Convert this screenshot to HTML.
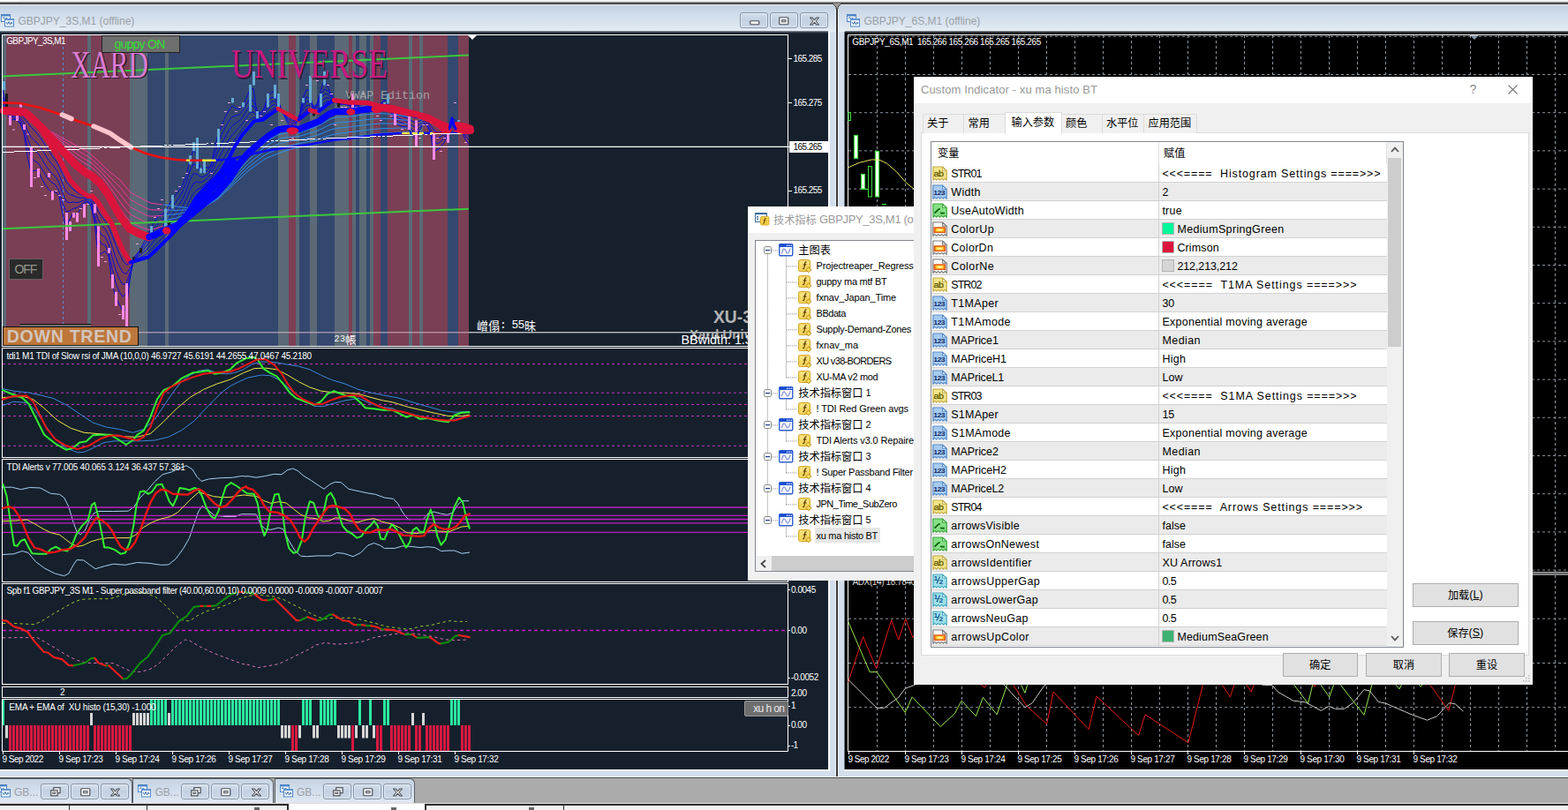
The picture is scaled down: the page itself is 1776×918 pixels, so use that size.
<!DOCTYPE html>
<html><head><meta charset="utf-8"><title>MT4</title>
<style>
html,body{margin:0;padding:0;}
body{width:1776px;height:918px;overflow:hidden;background:#ababab;font-family:"Liberation Sans", sans-serif;position:relative;}
div,svg,span{position:absolute;box-sizing:border-box;}
.t{white-space:pre;line-height:1;}

.tb{background:linear-gradient(#c2d0e0 0%,#cfdcea 35%,#dde7f1 80%,#e6edf5 100%);}
.wbtn{border:1px solid #8595aa;border-radius:3px;background:linear-gradient(#d3deeb,#c3d1e2 50%,#cbd8e7);box-shadow:inset 0 0 0 1px rgba(255,255,255,.45);}
.ttl{color:#9a9fa6;font-size:12px;}
svg text.cjk{font-family:"Liberation Sans","Noto Sans CJK SC",sans-serif;}

</style></head><body>
<div style="left:0;top:0;width:1776px;height:3px;background:#f0f0f0"></div><div style="left:0;top:0;width:22px;height:2px;background:#fff"></div><div style="left:0;top:2px;width:1776px;height:3px;background:linear-gradient(#b0b0b0,#555 45%,#3a3a3a)"></div><div class="tb" style="left:0;top:5px;width:1776px;height:31px;"></div><div style="left:0;top:5px;width:1776px;height:1px;background:#e9eef5"></div><div style="left:0;top:36px;width:1776px;height:844px;background:#d3dfec"></div><div style="left:0;top:35px;width:938px;height:837px;background:linear-gradient(#98a0a8 0px,#3a4450 1.5px,#15202c 3px)"></div><div style="left:938px;top:36px;width:2px;height:837px;background:#f6f8fb"></div><div style="left:0;top:872px;width:940px;height:1.6px;background:#f8fafc"></div><div style="left:957px;top:35px;width:819px;height:837px;background:linear-gradient(#98a0a8 0px,#30343a 1.5px,#000 3px)"></div><div style="left:956px;top:36px;width:1px;height:837px;background:#6c7886"></div><div style="left:956px;top:872px;width:820px;height:1.6px;background:#f8fafc"></div><div style="left:946px;top:5px;width:4px;height:875px;background:#eef3f8"></div><div style="left:947px;top:5px;width:2px;height:877px;background:#3a3a3a"></div><svg style="left:941px;top:3px" width="14" height="7"><path d="M1 0 L13 0 L8 5 L8 7 L6 7 L6 5 Z" fill="#9a9a9a" stroke="#3a3a3a" stroke-width="1"/></svg><svg style="left:1px;top:16px" width="15" height="15" viewBox="0 0 15 15">
<rect x="0.5" y="0.5" width="10" height="8" fill="#f4fbff" stroke="#4f86c6"/>
<rect x="0.5" y="0.5" width="10" height="2" fill="#4f86c6"/>
<polyline points="2,5 3.5,3.5 5,6 6.5,4 8,6" fill="none" stroke="#3b6ea8" stroke-width="1"/>
<rect x="4.5" y="5.5" width="10" height="8.5" fill="#f4fbff" stroke="#4f86c6"/>
<rect x="4.5" y="5.5" width="10" height="1.6" fill="#6d9bd2"/>
<polyline points="6,9 7.5,11.5 9,8.5 10.5,12 12,9 13,11" fill="none" stroke="#3b6ea8" stroke-width="1"/>
</svg><div class="t ttl" style="left:20.5px;top:18px;">GBPJPY_3S,M1 (offline)</div><svg style="left:959px;top:16px" width="15" height="15" viewBox="0 0 15 15">
<rect x="0.5" y="0.5" width="10" height="8" fill="#f4fbff" stroke="#4f86c6"/>
<rect x="0.5" y="0.5" width="10" height="2" fill="#4f86c6"/>
<polyline points="2,5 3.5,3.5 5,6 6.5,4 8,6" fill="none" stroke="#3b6ea8" stroke-width="1"/>
<rect x="4.5" y="5.5" width="10" height="8.5" fill="#f4fbff" stroke="#4f86c6"/>
<rect x="4.5" y="5.5" width="10" height="1.6" fill="#6d9bd2"/>
<polyline points="6,9 7.5,11.5 9,8.5 10.5,12 12,9 13,11" fill="none" stroke="#3b6ea8" stroke-width="1"/>
</svg><div class="t ttl" style="left:978.5px;top:18px;">GBPJPY_6S,M1 (offline)</div><div class="wbtn" style="left:837.5px;top:14px;width:32px;height:18px;"><svg style="left:10px;top:7.5px" width="12" height="6"><rect x="0.75" y="0.75" width="10" height="4" rx="0.8" fill="#f4f4f4" stroke="#4d5259" stroke-width="1.2"/></svg></div><div class="wbtn" style="left:871.8px;top:14px;width:32px;height:18px;"><svg style="left:9.5px;top:4px" width="12" height="10"><rect x="0.75" y="0.75" width="10" height="8" rx="0.8" fill="#f8f8f8" stroke="#4d5259" stroke-width="1.2"/><rect x="3.6" y="3.6" width="4.4" height="2.2" fill="#c9d3df" stroke="#4d5259" stroke-width="1"/></svg></div><div class="wbtn" style="left:905.8px;top:14px;width:32px;height:18px;"><svg style="left:9px;top:4px" width="13" height="10" viewBox="0 0 13 10"><path d="M1.5 1 L4 1 L6.5 3.6 L9 1 L11.5 1 L8 5 L11.5 9 L9 9 L6.5 6.4 L4 9 L1.5 9 L5 5 Z" fill="#f8f8f8" stroke="#4d5259" stroke-width="1.1" stroke-linejoin="round"/></svg></div><div style="left:0;top:880px;width:1776px;height:30px;background:#ababab"></div><div style="left:0;top:880px;width:1776px;height:1px;background:#f2f5f9"></div><div style="left:0;top:881px;width:1776px;height:1px;background:#4c4c4c"></div><div class="tb" style="left:-9.5px;top:882px;width:159.5px;height:28px;border:1px solid #5a5f66;border-bottom:none;border-radius:0 6px 0 0;background:linear-gradient(#c6d3e2,#d3dfec 50%,#dfe8f2)"><svg style="left:5px;top:6px" width="15" height="15" viewBox="0 0 15 15">
<rect x="0.5" y="0.5" width="10" height="8" fill="#f4fbff" stroke="#4f86c6"/>
<rect x="0.5" y="0.5" width="10" height="2" fill="#4f86c6"/>
<polyline points="2,5 3.5,3.5 5,6 6.5,4 8,6" fill="none" stroke="#3b6ea8" stroke-width="1"/>
<rect x="4.5" y="5.5" width="10" height="8.5" fill="#f4fbff" stroke="#4f86c6"/>
<rect x="4.5" y="5.5" width="10" height="1.6" fill="#6d9bd2"/>
<polyline points="6,9 7.5,11.5 9,8.5 10.5,12 12,9 13,11" fill="none" stroke="#3b6ea8" stroke-width="1"/>
</svg><div class="t ttl" style="left:24.5px;top:9px;font-size:12px">GB...</div><div class="wbtn" style="left:54.2px;top:5px;width:32px;height:18px;"><svg style="left:10px;top:3px" width="12" height="11"><rect x="3.7" y="0.7" width="7.4" height="6" fill="#f8f8f8" stroke="#4d5259" stroke-width="1.2"/><rect x="0.7" y="3.8" width="7.4" height="6" fill="#f8f8f8" stroke="#4d5259" stroke-width="1.2"/><rect x="2.8" y="6" width="3" height="1.6" fill="#c9d3df" stroke="#4d5259" stroke-width=".8"/></svg></div><div class="wbtn" style="left:88.1px;top:5px;width:32px;height:18px;"><svg style="left:10px;top:3.5px" width="12" height="10"><rect x="0.75" y="0.75" width="10" height="8" rx="0.8" fill="#f8f8f8" stroke="#4d5259" stroke-width="1.2"/><rect x="3.6" y="3.6" width="4.4" height="2.2" fill="#c9d3df" stroke="#4d5259" stroke-width="1"/></svg></div><div class="wbtn" style="left:122.0px;top:5px;width:32px;height:18px;"><svg style="left:9.5px;top:3.5px" width="13" height="10" viewBox="0 0 13 10"><path d="M1.5 1 L4 1 L6.5 3.6 L9 1 L11.5 1 L8 5 L11.5 9 L9 9 L6.5 6.4 L4 9 L1.5 9 L5 5 Z" fill="#f8f8f8" stroke="#4d5259" stroke-width="1.1" stroke-linejoin="round"/></svg></div></div><div class="tb" style="left:150px;top:882px;width:160px;height:28px;border:1px solid #5a5f66;border-bottom:none;border-radius:0 6px 0 0;background:linear-gradient(#c6d3e2,#d3dfec 50%,#dfe8f2)"><svg style="left:5px;top:6px" width="15" height="15" viewBox="0 0 15 15">
<rect x="0.5" y="0.5" width="10" height="8" fill="#f4fbff" stroke="#4f86c6"/>
<rect x="0.5" y="0.5" width="10" height="2" fill="#4f86c6"/>
<polyline points="2,5 3.5,3.5 5,6 6.5,4 8,6" fill="none" stroke="#3b6ea8" stroke-width="1"/>
<rect x="4.5" y="5.5" width="10" height="8.5" fill="#f4fbff" stroke="#4f86c6"/>
<rect x="4.5" y="5.5" width="10" height="1.6" fill="#6d9bd2"/>
<polyline points="6,9 7.5,11.5 9,8.5 10.5,12 12,9 13,11" fill="none" stroke="#3b6ea8" stroke-width="1"/>
</svg><div class="t ttl" style="left:24.5px;top:9px;font-size:12px">GB...</div><div class="wbtn" style="left:54.2px;top:5px;width:32px;height:18px;"><svg style="left:10px;top:3px" width="12" height="11"><rect x="3.7" y="0.7" width="7.4" height="6" fill="#f8f8f8" stroke="#4d5259" stroke-width="1.2"/><rect x="0.7" y="3.8" width="7.4" height="6" fill="#f8f8f8" stroke="#4d5259" stroke-width="1.2"/><rect x="2.8" y="6" width="3" height="1.6" fill="#c9d3df" stroke="#4d5259" stroke-width=".8"/></svg></div><div class="wbtn" style="left:88.1px;top:5px;width:32px;height:18px;"><svg style="left:10px;top:3.5px" width="12" height="10"><rect x="0.75" y="0.75" width="10" height="8" rx="0.8" fill="#f8f8f8" stroke="#4d5259" stroke-width="1.2"/><rect x="3.6" y="3.6" width="4.4" height="2.2" fill="#c9d3df" stroke="#4d5259" stroke-width="1"/></svg></div><div class="wbtn" style="left:122.0px;top:5px;width:32px;height:18px;"><svg style="left:9.5px;top:3.5px" width="13" height="10" viewBox="0 0 13 10"><path d="M1.5 1 L4 1 L6.5 3.6 L9 1 L11.5 1 L8 5 L11.5 9 L9 9 L6.5 6.4 L4 9 L1.5 9 L5 5 Z" fill="#f8f8f8" stroke="#4d5259" stroke-width="1.1" stroke-linejoin="round"/></svg></div></div><div class="tb" style="left:310.5px;top:882px;width:159.5px;height:28px;border:1px solid #5a5f66;border-bottom:none;border-radius:0 6px 0 0;background:linear-gradient(#c6d3e2,#d3dfec 50%,#dfe8f2)"><svg style="left:5px;top:6px" width="15" height="15" viewBox="0 0 15 15">
<rect x="0.5" y="0.5" width="10" height="8" fill="#f4fbff" stroke="#4f86c6"/>
<rect x="0.5" y="0.5" width="10" height="2" fill="#4f86c6"/>
<polyline points="2,5 3.5,3.5 5,6 6.5,4 8,6" fill="none" stroke="#3b6ea8" stroke-width="1"/>
<rect x="4.5" y="5.5" width="10" height="8.5" fill="#f4fbff" stroke="#4f86c6"/>
<rect x="4.5" y="5.5" width="10" height="1.6" fill="#6d9bd2"/>
<polyline points="6,9 7.5,11.5 9,8.5 10.5,12 12,9 13,11" fill="none" stroke="#3b6ea8" stroke-width="1"/>
</svg><div class="t ttl" style="left:24.5px;top:9px;font-size:12px">GB...</div><div class="wbtn" style="left:54.2px;top:5px;width:32px;height:18px;"><svg style="left:10px;top:3px" width="12" height="11"><rect x="3.7" y="0.7" width="7.4" height="6" fill="#f8f8f8" stroke="#4d5259" stroke-width="1.2"/><rect x="0.7" y="3.8" width="7.4" height="6" fill="#f8f8f8" stroke="#4d5259" stroke-width="1.2"/><rect x="2.8" y="6" width="3" height="1.6" fill="#c9d3df" stroke="#4d5259" stroke-width=".8"/></svg></div><div class="wbtn" style="left:88.1px;top:5px;width:32px;height:18px;"><svg style="left:10px;top:3.5px" width="12" height="10"><rect x="0.75" y="0.75" width="10" height="8" rx="0.8" fill="#f8f8f8" stroke="#4d5259" stroke-width="1.2"/><rect x="3.6" y="3.6" width="4.4" height="2.2" fill="#c9d3df" stroke="#4d5259" stroke-width="1"/></svg></div><div class="wbtn" style="left:122.0px;top:5px;width:32px;height:18px;"><svg style="left:9.5px;top:3.5px" width="13" height="10" viewBox="0 0 13 10"><path d="M1.5 1 L4 1 L6.5 3.6 L9 1 L11.5 1 L8 5 L11.5 9 L9 9 L6.5 6.4 L4 9 L1.5 9 L5 5 Z" fill="#f8f8f8" stroke="#4d5259" stroke-width="1.1" stroke-linejoin="round"/></svg></div></div><div style="left:0;top:910px;width:1776px;height:8px;background:#f2f2f2"></div><div style="left:0;top:910px;width:1776px;height:1px;background:#dcdcdc"></div><div style="left:0;top:911px;width:326px;height:2px;background:#2c2c2c"></div><div style="left:481px;top:911px;width:1295px;height:2px;background:#2c2c2c"></div><div style="left:326px;top:911px;width:155px;height:7px;background:#fff"></div><div style="left:78px;top:911px;width:1px;height:7px;background:#2c2c2c"></div><div style="left:166px;top:911px;width:1px;height:7px;background:#2c2c2c"></div><div style="left:325px;top:911px;width:2px;height:7px;background:#2c2c2c"></div><div style="left:481px;top:911px;width:2px;height:7px;background:#2c2c2c"></div><div style="left:638px;top:911px;width:1px;height:7px;background:#2c2c2c"></div><div style="left:288px;top:915px;width:6px;height:3px;background:#666"></div><div style="left:443px;top:915px;width:6px;height:3px;background:#666"></div><div style="left:599px;top:915px;width:6px;height:3px;background:#666"></div><svg style="left:0;top:36px" width="939" height="360" viewBox="0 36 939 360"><rect x="3" y="40" width="4" height="352" fill="#5a6975"/><rect x="7" y="40" width="92" height="352" fill="#7a3f55"/><rect x="99" y="40" width="4" height="352" fill="#5a6975"/><rect x="103" y="40" width="44" height="352" fill="#7a3f55"/><rect x="147" y="40" width="20" height="352" fill="#5a6975"/><rect x="167" y="40" width="20" height="352" fill="#34486f"/><rect x="187" y="40" width="4" height="352" fill="#5a6975"/><rect x="191" y="40" width="124" height="352" fill="#34486f"/><rect x="315" y="40" width="12" height="352" fill="#5a6975"/><rect x="327" y="40" width="8" height="352" fill="#7a3f55"/><rect x="335" y="40" width="4" height="352" fill="#5a6975"/><rect x="339" y="40" width="12" height="352" fill="#34486f"/><rect x="351" y="40" width="8" height="352" fill="#5a6975"/><rect x="359" y="40" width="20" height="352" fill="#34486f"/><rect x="379" y="40" width="16" height="352" fill="#5a6975"/><rect x="395" y="40" width="4" height="352" fill="#7a3f55"/><rect x="399" y="40" width="4" height="352" fill="#5a6975"/><rect x="403" y="40" width="4" height="352" fill="#34486f"/><rect x="407" y="40" width="8" height="352" fill="#5a6975"/><rect x="415" y="40" width="4" height="352" fill="#34486f"/><rect x="419" y="40" width="4" height="352" fill="#5a6975"/><rect x="423" y="40" width="8" height="352" fill="#7a3f55"/><rect x="431" y="40" width="8" height="352" fill="#34486f"/><rect x="439" y="40" width="24" height="352" fill="#7a3f55"/><rect x="463" y="40" width="4" height="352" fill="#5a6975"/><rect x="467" y="40" width="8" height="352" fill="#7a3f55"/><rect x="475" y="40" width="4" height="352" fill="#5a6975"/><rect x="479" y="40" width="28" height="352" fill="#7a3f55"/><rect x="507" y="40" width="12" height="352" fill="#34486f"/><rect x="519" y="40" width="12" height="352" fill="#7a3f55"/><line x1="71.5" y1="47" x2="71.5" y2="368" stroke="#5b8fd0" stroke-width="1" stroke-dasharray="3,3"/><polyline points="3.0,101.3 7.0,119.4 11.0,136.3 15.0,135.5 19.0,135.9 23.0,140.4 27.0,150.4 31.0,176.6 35.0,195.6 39.0,193.1 43.0,193.2 47.0,201.4 51.0,208.9 55.0,214.5 59.0,218.5 63.0,217.5 67.0,222.0 71.0,243.2 75.0,257.1 79.0,248.4 83.0,241.0 87.0,243.7 91.0,237.2 95.0,231.3 99.0,228.1 103.0,232.6 107.0,251.0 111.0,289.1 115.0,287.2 119.0,284.8 123.0,290.1 127.0,320.9 131.0,337.0 135.0,344.8 139.0,352.6 143.0,350.3 147.0,317.9 151.0,292.3 155.0,287.8 159.0,282.4 163.0,274.6 167.0,267.3 171.0,259.7 175.0,251.3 179.0,244.7 183.0,243.4 187.0,240.5 191.0,232.9 195.0,226.1 199.0,221.2 203.0,215.7 207.0,208.9 211.0,199.1 215.0,181.7 219.0,170.3 223.0,175.0 227.0,194.7 231.0,188.3 235.0,190.4 239.0,187.3 243.0,168.3 247.0,151.8 251.0,142.4 255.0,133.2 259.0,125.4 263.0,120.1 267.0,122.7 271.0,123.9 275.0,119.3 279.0,111.3 283.0,101.6 287.0,100.2 291.0,128.8 295.0,127.9 299.0,123.1 303.0,109.8 307.0,105.0 311.0,103.6 315.0,112.8 319.0,124.8 323.0,133.8 327.0,141.8 331.0,146.5 335.0,141.5 339.0,131.9 343.0,112.0 347.0,101.9 351.0,103.0 355.0,127.1 359.0,117.5 363.0,104.7 367.0,90.6 371.0,98.4 375.0,106.3 379.0,114.0 383.0,119.1 387.0,118.3 391.0,118.1 395.0,120.0 399.0,121.1 403.0,120.2 407.0,119.3 411.0,118.5 415.0,118.1 419.0,119.4 423.0,120.7 427.0,120.8 431.0,117.4 435.0,113.9 439.0,114.6 443.0,127.9 447.0,138.6 451.0,141.3 455.0,143.4 459.0,143.5 463.0,145.8 467.0,154.2 471.0,158.1 475.0,148.1 479.0,140.7 483.0,140.8 487.0,148.9 491.0,172.2 495.0,169.8 499.0,166.7 503.0,161.7 507.0,152.8 511.0,136.6 515.0,135.4 519.0,139.9 523.0,149.2 527.0,157.6 531.0,163.4" fill="none" stroke="#0a0ad8" stroke-width="1" stroke-linejoin="round" stroke-linecap="round" /><polyline points="3.0,109.8 7.0,120.4 11.0,130.6 15.0,133.8 19.0,134.8 23.0,138.8 27.0,149.1 31.0,165.7 35.0,178.6 39.0,182.3 43.0,184.5 47.0,190.4 51.0,197.4 55.0,203.2 59.0,207.0 63.0,209.6 67.0,216.8 71.0,230.4 75.0,240.0 79.0,239.3 83.0,236.3 87.0,235.5 91.0,233.1 95.0,229.4 99.0,228.2 103.0,233.3 107.0,249.6 111.0,269.0 115.0,276.6 119.0,277.6 123.0,286.6 127.0,304.5 131.0,320.5 135.0,330.3 139.0,336.3 143.0,332.0 147.0,314.6 151.0,297.3 155.0,289.1 159.0,284.3 163.0,278.4 167.0,272.1 171.0,265.4 175.0,258.6 179.0,253.2 183.0,250.0 187.0,246.2 191.0,240.5 195.0,234.4 199.0,229.2 203.0,223.6 207.0,216.7 211.0,206.6 215.0,194.0 219.0,185.6 223.0,187.9 227.0,194.4 231.0,195.3 235.0,193.4 239.0,188.0 243.0,175.7 247.0,162.6 251.0,152.7 255.0,144.4 259.0,137.0 263.0,132.3 267.0,131.0 271.0,129.8 275.0,125.4 279.0,118.4 283.0,111.7 287.0,114.1 291.0,124.6 295.0,128.8 299.0,123.7 303.0,116.0 307.0,110.6 311.0,110.3 315.0,115.7 319.0,124.3 323.0,132.3 327.0,138.7 331.0,141.6 335.0,139.1 339.0,130.3 343.0,118.0 347.0,109.6 351.0,112.3 355.0,120.2 359.0,118.6 363.0,108.5 367.0,101.3 371.0,102.5 375.0,108.2 379.0,113.5 383.0,116.9 387.0,117.7 391.0,118.0 395.0,119.0 399.0,119.6 403.0,119.4 407.0,118.7 411.0,118.1 415.0,118.1 419.0,119.0 423.0,120.0 427.0,119.8 431.0,117.9 435.0,116.1 439.0,118.4 443.0,126.1 447.0,133.7 451.0,137.5 455.0,139.1 459.0,140.3 463.0,143.1 467.0,147.9 471.0,149.3 475.0,144.9 479.0,140.2 483.0,140.6 487.0,148.8 491.0,159.6 495.0,163.1 499.0,160.7 503.0,156.6 507.0,149.0 511.0,140.3 515.0,137.5 519.0,141.1 523.0,147.6 527.0,154.2 531.0,158.3" fill="none" stroke="#0a0ad8" stroke-width="1" stroke-linejoin="round" stroke-linecap="round" /><polyline points="3.0,113.9 7.0,121.8 11.0,129.4 15.0,131.8 19.0,132.6 23.0,135.8 27.0,143.8 31.0,156.7 35.0,167.0 39.0,170.8 43.0,173.7 47.0,179.5 51.0,186.3 55.0,192.3 59.0,196.8 63.0,200.4 67.0,207.4 71.0,219.4 75.0,228.5 79.0,229.8 83.0,229.0 87.0,229.6 91.0,228.7 95.0,226.8 99.0,226.4 103.0,230.6 107.0,243.4 111.0,258.9 115.0,266.1 119.0,268.5 123.0,276.7 127.0,291.8 131.0,306.0 135.0,315.9 139.0,322.6 143.0,321.3 147.0,309.5 151.0,297.0 155.0,290.7 159.0,286.8 163.0,282.1 167.0,277.0 171.0,271.4 175.0,265.3 179.0,260.4 183.0,257.0 187.0,253.1 191.0,247.8 195.0,242.3 199.0,237.3 203.0,231.9 207.0,225.3 211.0,216.0 215.0,204.8 219.0,196.8 223.0,197.0 227.0,200.6 231.0,200.1 235.0,197.7 239.0,192.7 243.0,182.4 247.0,171.5 251.0,162.9 255.0,155.2 259.0,147.9 263.0,142.5 267.0,139.6 271.0,137.0 275.0,132.4 279.0,125.9 283.0,119.7 287.0,120.5 291.0,127.8 295.0,130.6 299.0,126.5 303.0,120.1 307.0,115.3 311.0,114.4 315.0,118.0 319.0,124.6 323.0,131.1 327.0,136.4 331.0,139.2 335.0,137.8 339.0,131.3 343.0,121.6 347.0,114.4 351.0,115.8 355.0,121.6 359.0,120.6 363.0,112.6 367.0,106.5 371.0,106.6 375.0,110.1 379.0,113.7 383.0,116.2 387.0,117.0 391.0,117.3 395.0,118.2 399.0,118.7 403.0,118.5 407.0,118.1 411.0,117.7 415.0,117.7 419.0,118.5 423.0,119.6 427.0,119.7 431.0,118.5 435.0,117.3 439.0,119.1 443.0,125.0 447.0,130.8 451.0,133.9 455.0,135.4 459.0,136.5 463.0,138.8 467.0,142.7 471.0,144.0 475.0,141.0 479.0,137.8 483.0,138.4 487.0,144.9 491.0,153.4 495.0,156.5 499.0,155.2 503.0,152.6 507.0,146.9 511.0,140.2 515.0,138.1 519.0,141.2 523.0,146.3 527.0,151.4 531.0,154.7" fill="none" stroke="#0a0ad8" stroke-width="1" stroke-linejoin="round" stroke-linecap="round" /><polyline points="3.0,117.9 7.0,123.1 11.0,128.2 15.0,129.9 19.0,130.5 23.0,132.8 27.0,138.5 31.0,147.6 35.0,155.4 39.0,159.4 43.0,163.0 47.0,168.7 51.0,175.3 55.0,181.4 59.0,186.5 63.0,191.1 67.0,198.0 71.0,208.4 75.0,217.1 79.0,220.4 83.0,221.7 87.0,223.6 91.0,224.4 95.0,224.2 99.0,224.6 103.0,227.9 107.0,237.1 111.0,248.8 115.0,255.6 119.0,259.5 123.0,266.9 127.0,279.2 131.0,291.6 135.0,301.4 139.0,308.9 143.0,310.5 147.0,304.5 151.0,296.7 155.0,292.2 159.0,289.2 163.0,285.8 167.0,281.9 171.0,277.3 175.0,272.1 179.0,267.6 183.0,264.0 187.0,260.1 191.0,255.2 195.0,250.2 199.0,245.4 203.0,240.2 207.0,233.8 211.0,225.5 215.0,215.7 219.0,208.1 223.0,206.1 227.0,206.8 231.0,205.0 235.0,202.0 239.0,197.3 243.0,189.2 247.0,180.5 251.0,173.1 255.0,165.9 259.0,158.8 263.0,152.7 267.0,148.3 271.0,144.3 275.0,139.3 279.0,133.4 283.0,127.8 287.0,126.9 291.0,131.0 295.0,132.5 299.0,129.2 303.0,124.1 307.0,120.0 311.0,118.5 315.0,120.3 319.0,124.9 323.0,130.0 327.0,134.2 331.0,136.7 335.0,136.5 339.0,132.3 343.0,125.1 347.0,119.3 351.0,119.4 355.0,123.1 359.0,122.5 363.0,116.7 367.0,111.7 371.0,110.7 375.0,112.1 379.0,113.9 383.0,115.5 387.0,116.2 391.0,116.7 395.0,117.4 399.0,117.8 403.0,117.7 407.0,117.4 411.0,117.2 415.0,117.3 419.0,118.1 423.0,119.2 427.0,119.6 431.0,119.1 435.0,118.4 439.0,119.8 443.0,123.9 447.0,128.0 451.0,130.3 455.0,131.6 459.0,132.7 463.0,134.6 467.0,137.5 471.0,138.7 475.0,137.1 479.0,135.4 483.0,136.2 487.0,141.0 491.0,147.2 495.0,149.9 499.0,149.6 503.0,148.5 507.0,144.9 511.0,140.2 515.0,138.8 519.0,141.3 523.0,145.0 527.0,148.6 531.0,151.0" fill="none" stroke="#0a0ad8" stroke-width="1" stroke-linejoin="round" stroke-linecap="round" /><polyline points="3.0,122.0 7.0,124.5 11.0,127.0 15.0,127.9 19.0,128.3 23.0,129.8 27.0,133.2 31.0,138.6 35.0,143.8 39.0,147.9 43.0,152.2 47.0,157.9 51.0,164.2 55.0,170.5 59.0,176.3 63.0,181.8 67.0,188.6 71.0,197.4 75.0,205.6 79.0,211.0 83.0,214.5 87.0,217.7 91.0,220.1 95.0,221.5 99.0,222.8 103.0,225.2 107.0,230.9 111.0,238.7 115.0,245.1 119.0,250.4 123.0,257.1 127.0,266.5 131.0,277.2 135.0,287.0 139.0,295.1 143.0,299.8 147.0,299.5 151.0,296.4 155.0,293.8 159.0,291.7 163.0,289.5 167.0,286.8 171.0,283.2 175.0,278.9 179.0,274.7 183.0,270.9 187.0,267.0 191.0,262.6 195.0,258.1 199.0,253.5 203.0,248.4 207.0,242.4 211.0,234.9 215.0,226.5 219.0,219.3 223.0,215.3 227.0,213.0 231.0,209.9 235.0,206.3 239.0,202.0 243.0,196.0 247.0,189.5 251.0,183.3 255.0,176.7 259.0,169.7 263.0,162.9 267.0,156.9 271.0,151.6 275.0,146.3 279.0,140.9 283.0,135.8 287.0,133.3 291.0,134.2 295.0,134.3 299.0,131.9 303.0,128.2 307.0,124.8 311.0,122.5 315.0,122.6 319.0,125.2 323.0,128.8 327.0,131.9 331.0,134.3 335.0,135.1 339.0,133.3 343.0,128.7 347.0,124.2 351.0,122.9 355.0,124.6 359.0,124.4 363.0,120.8 367.0,116.9 371.0,114.8 375.0,114.1 379.0,114.1 383.0,114.9 387.0,115.5 391.0,116.0 395.0,116.6 399.0,116.9 403.0,116.9 407.0,116.8 411.0,116.8 415.0,117.0 419.0,117.7 423.0,118.8 427.0,119.5 431.0,119.6 435.0,119.6 439.0,120.5 443.0,122.8 447.0,125.1 451.0,126.7 455.0,127.8 459.0,128.9 463.0,130.3 467.0,132.3 471.0,133.4 475.0,133.2 479.0,133.0 483.0,134.0 487.0,137.1 491.0,141.0 495.0,143.3 499.0,144.1 503.0,144.4 507.0,142.9 511.0,140.1 515.0,139.5 519.0,141.4 523.0,143.6 527.0,145.8 531.0,147.4" fill="none" stroke="#0a0ad8" stroke-width="1" stroke-linejoin="round" stroke-linecap="round" /><polyline points="52.0,146.0 56.0,148.2 60.0,150.4 64.0,152.6 68.0,154.9 72.0,157.1 76.0,159.3 80.0,161.5 84.0,163.7 88.0,165.9 92.0,168.2 96.0,170.4 100.0,172.6 104.0,175.6 108.0,179.4 112.0,183.1 116.0,186.9 120.0,190.7 124.0,194.4 128.0,197.7 132.0,200.8 136.0,204.0 140.0,208.8 144.0,213.7 148.0,218.1 152.0,220.3 156.0,222.5 160.0,224.6 164.0,226.8 168.0,229.0 172.0,230.4 176.0,230.9 180.0,231.5 184.0,232.0" fill="none" stroke="#f0389a" stroke-width="1" stroke-linejoin="round" stroke-linecap="round" /><polyline points="52.0,146.8 56.0,149.4 60.0,152.1 64.0,154.7 68.0,157.4 72.0,160.0 76.0,162.7 80.0,165.3 84.0,168.0 88.0,170.5 92.0,172.9 96.0,175.3 100.0,177.5 104.0,180.3 108.0,184.1 112.0,187.8 116.0,191.8 120.0,195.9 124.0,200.1 128.0,204.2 132.0,208.2 136.0,212.1 140.0,217.2 144.0,222.1 148.0,226.5 152.0,228.6 156.0,230.8 160.0,232.9 164.0,234.9 168.0,236.9 172.0,237.8 176.0,237.9 180.0,238.0 184.0,238.1" fill="none" stroke="#f0389a" stroke-width="1" stroke-linejoin="round" stroke-linecap="round" /><polyline points="52.0,147.5 56.0,150.6 60.0,153.7 64.0,156.8 68.0,159.9 72.0,163.0 76.0,166.1 80.0,169.2 84.0,172.2 88.0,175.0 92.0,177.6 96.0,180.2 100.0,182.4 104.0,185.1 108.0,188.7 112.0,192.4 116.0,196.6 120.0,201.1 124.0,205.9 128.0,210.8 132.0,215.6 136.0,220.2 140.0,225.5 144.0,230.4 148.0,234.8 152.0,236.9 156.0,239.1 160.0,241.1 164.0,242.9 168.0,244.8 172.0,245.2 176.0,244.9 180.0,244.5 184.0,244.1" fill="none" stroke="#f0389a" stroke-width="1" stroke-linejoin="round" stroke-linecap="round" /><polyline points="52.0,148.3 56.0,151.8 60.0,155.4 64.0,158.9 68.0,162.4 72.0,165.9 76.0,169.5 80.0,173.0 84.0,176.5 88.0,179.5 92.0,182.3 96.0,185.1 100.0,187.4 104.0,189.9 108.0,193.4 112.0,197.1 116.0,201.5 120.0,206.3 124.0,211.6 128.0,217.3 132.0,222.9 136.0,228.3 140.0,233.9 144.0,238.8 148.0,243.2 152.0,245.3 156.0,247.4 160.0,249.3 164.0,251.0 168.0,252.7 172.0,252.6 176.0,252.0 180.0,251.1 184.0,250.2" fill="none" stroke="#f0389a" stroke-width="1" stroke-linejoin="round" stroke-linecap="round" /><polyline points="52.0,149.0 56.0,153.0 60.0,157.0 64.0,161.0 68.0,164.9 72.0,168.9 76.0,172.8 80.0,176.8 84.0,180.7 88.0,184.0 92.0,187.0 96.0,190.0 100.0,192.3 104.0,194.6 108.0,198.1 112.0,201.7 116.0,206.3 120.0,211.5 124.0,217.3 128.0,223.9 132.0,230.3 136.0,236.4 140.0,242.2 144.0,247.1 148.0,251.6 152.0,253.6 156.0,255.7 160.0,257.5 164.0,259.0 168.0,260.5 172.0,260.0 176.0,259.0 180.0,257.6 184.0,256.3" fill="none" stroke="#f0389a" stroke-width="1" stroke-linejoin="round" stroke-linecap="round" /><polyline points="186.0,232.0 190.0,232.6 194.0,233.1 198.0,233.7 202.0,234.3 206.0,234.8 210.0,235.3 214.0,235.9 218.0,235.6 222.0,235.2 226.0,234.7 230.0,234.2 234.0,232.9 238.0,230.6 242.0,228.3 246.0,226.0 250.0,222.4 254.0,218.8 258.0,215.2 262.0,211.5 266.0,207.7 270.0,204.0 274.0,200.3 278.0,196.7 282.0,193.0 286.0,190.1 290.0,187.2 294.0,184.3 298.0,181.4 302.0,179.2 306.0,177.6 310.0,176.0 314.0,174.4 318.0,172.8 322.0,171.4 326.0,170.3 330.0,169.2 334.0,168.1 338.0,167.0 342.0,166.3 346.0,165.5 350.0,164.8 354.0,164.1 358.0,163.4 362.0,162.5 366.0,161.5 370.0,160.5 374.0,159.5 378.0,158.5 382.0,157.7 386.0,157.1 390.0,156.5 394.0,155.9 398.0,155.3 402.0,154.8 406.0,154.3 410.0,153.8 414.0,153.4 418.0,152.9 422.0,152.4 426.0,152.0 430.0,151.5 434.0,151.2 438.0,151.0 442.0,150.7 446.0,150.4 450.0,150.2 454.0,149.9 458.0,149.6 462.0,149.5" fill="none" stroke="#2b8cf0" stroke-width="1" stroke-linejoin="round" stroke-linecap="round" /><polyline points="186.0,237.9 190.0,238.0 194.0,238.2 198.0,238.3 202.0,238.3 206.0,238.1 210.0,237.9 214.0,237.7 218.0,236.9 222.0,235.8 226.0,234.8 230.0,233.7 234.0,232.0 238.0,229.6 242.0,227.1 246.0,224.6 250.0,220.8 254.0,217.0 258.0,213.2 262.0,209.1 266.0,204.9 270.0,200.6 274.0,196.7 278.0,192.8 282.0,188.9 286.0,185.9 290.0,182.9 294.0,179.9 298.0,177.0 302.0,174.5 306.0,172.6 310.0,170.9 314.0,169.1 318.0,167.5 322.0,166.3 326.0,165.4 330.0,164.6 334.0,163.7 338.0,162.9 342.0,162.0 346.0,161.1 350.0,160.2 354.0,159.3 358.0,158.4 362.0,157.4 366.0,156.0 370.0,154.7 374.0,153.4 378.0,152.3 382.0,151.5 386.0,151.0 390.0,150.5 394.0,150.0 398.0,149.4 402.0,148.9 406.0,148.5 410.0,148.0 414.0,147.5 418.0,147.0 422.0,146.6 426.0,146.2 430.0,145.8 434.0,145.6 438.0,145.5 442.0,145.4 446.0,145.3 450.0,145.2 454.0,145.2 458.0,145.1 462.0,145.2" fill="none" stroke="#2b8cf0" stroke-width="1" stroke-linejoin="round" stroke-linecap="round" /><polyline points="186.0,243.8 190.0,243.5 194.0,243.2 198.0,242.9 202.0,242.4 206.0,241.5 210.0,240.5 214.0,239.5 218.0,238.1 222.0,236.4 226.0,234.8 230.0,233.2 234.0,231.1 238.0,228.5 242.0,226.0 246.0,223.1 250.0,219.2 254.0,215.2 258.0,211.3 262.0,206.8 266.0,202.0 270.0,197.2 274.0,193.0 278.0,188.9 282.0,184.8 286.0,181.7 290.0,178.6 294.0,175.6 298.0,172.5 302.0,169.8 306.0,167.6 310.0,165.7 314.0,163.8 318.0,162.3 322.0,161.2 326.0,160.4 330.0,159.9 334.0,159.3 338.0,158.8 342.0,157.8 346.0,156.7 350.0,155.7 354.0,154.6 358.0,153.5 362.0,152.3 366.0,150.5 370.0,148.8 374.0,147.3 378.0,146.0 382.0,145.2 386.0,144.9 390.0,144.5 394.0,144.1 398.0,143.6 402.0,143.1 406.0,142.6 410.0,142.1 414.0,141.7 418.0,141.2 422.0,140.8 426.0,140.4 430.0,140.0 434.0,140.0 438.0,140.0 442.0,140.1 446.0,140.2 450.0,140.3 454.0,140.4 458.0,140.6 462.0,140.8" fill="none" stroke="#2b8cf0" stroke-width="1" stroke-linejoin="round" stroke-linecap="round" /><polyline points="186.0,249.7 190.0,248.9 194.0,248.2 198.0,247.5 202.0,246.4 206.0,244.8 210.0,243.1 214.0,241.3 218.0,239.3 222.0,237.1 226.0,234.9 230.0,232.7 234.0,230.2 238.0,227.5 242.0,224.8 246.0,221.7 250.0,217.6 254.0,213.4 258.0,209.3 262.0,204.4 266.0,199.1 270.0,193.9 274.0,189.4 278.0,185.0 282.0,180.7 286.0,177.5 290.0,174.4 294.0,171.2 298.0,168.0 302.0,165.1 306.0,162.6 310.0,160.6 314.0,158.5 318.0,157.0 322.0,156.1 326.0,155.5 330.0,155.2 334.0,154.9 338.0,154.7 342.0,153.6 346.0,152.3 350.0,151.1 354.0,149.8 358.0,148.6 362.0,147.1 366.0,145.1 370.0,143.0 374.0,141.2 378.0,139.8 382.0,139.0 386.0,138.7 390.0,138.5 394.0,138.3 398.0,137.7 402.0,137.2 406.0,136.8 410.0,136.3 414.0,135.8 418.0,135.3 422.0,135.0 426.0,134.6 430.0,134.3 434.0,134.3 438.0,134.5 442.0,134.7 446.0,135.0 450.0,135.3 454.0,135.7 458.0,136.0 462.0,136.4" fill="none" stroke="#2b8cf0" stroke-width="1" stroke-linejoin="round" stroke-linecap="round" /><polyline points="186.0,255.6 190.0,254.4 194.0,253.2 198.0,252.1 202.0,250.5 206.0,248.2 210.0,245.7 214.0,243.2 218.0,240.5 222.0,237.7 226.0,234.9 230.0,232.2 234.0,229.4 238.0,226.5 242.0,223.7 246.0,220.2 250.0,215.9 254.0,211.7 258.0,207.4 262.0,202.1 266.0,196.3 270.0,190.5 274.0,185.7 278.0,181.2 282.0,176.6 286.0,173.3 290.0,170.1 294.0,166.8 298.0,163.5 302.0,160.4 306.0,157.7 310.0,155.5 314.0,153.3 318.0,151.8 322.0,151.0 326.0,150.5 330.0,150.5 334.0,150.6 338.0,150.6 342.0,149.4 346.0,147.9 350.0,146.5 354.0,145.1 358.0,143.6 362.0,142.0 366.0,139.6 370.0,137.2 374.0,135.0 378.0,133.5 382.0,132.7 386.0,132.6 390.0,132.5 394.0,132.4 398.0,131.9 402.0,131.4 406.0,130.9 410.0,130.4 414.0,130.0 418.0,129.5 422.0,129.1 426.0,128.8 430.0,128.5 434.0,128.7 438.0,129.0 442.0,129.4 446.0,129.9 450.0,130.3 454.0,130.9 458.0,131.5 462.0,132.1" fill="none" stroke="#2b8cf0" stroke-width="1" stroke-linejoin="round" stroke-linecap="round" /><rect x="10.0" y="131.0" width="3" height="11.0" fill="#ff8ae6"/><rect x="18.0" y="131.0" width="3" height="6.0" fill="#ff8ae6"/><rect x="22.0" y="116.0" width="3" height="5.5" fill="#ff8ae6"/><rect x="26.0" y="141.0" width="3" height="6.0" fill="#ff8ae6"/><rect x="34.0" y="166.0" width="3" height="46.0" fill="#ff8ae6"/><rect x="42.0" y="191.0" width="3" height="10.0" fill="#ff8ae6"/><rect x="54.0" y="196.0" width="3" height="5.0" fill="#ff8ae6"/><rect x="58.0" y="216.5" width="3" height="10.2" fill="#ff8ae6"/><rect x="74.0" y="241.0" width="3" height="31.0" fill="#ff8ae6"/><rect x="78.0" y="251.0" width="3" height="11.0" fill="#ff8ae6"/><rect x="82.0" y="241.0" width="3" height="5.6" fill="#ff8ae6"/><rect x="86.0" y="241.0" width="3" height="10.7" fill="#ff8ae6"/><rect x="94.0" y="231.3" width="3" height="15.3" fill="#ff8ae6"/><rect x="106.0" y="231.3" width="3" height="10.2" fill="#ff8ae6"/><rect x="110.0" y="256.2" width="3" height="45.8" fill="#ff8ae6"/><rect x="122.0" y="281.0" width="3" height="5.8" fill="#ff8ae6"/><rect x="126.0" y="311.0" width="3" height="15.8" fill="#ff8ae6"/><rect x="130.0" y="330.8" width="3" height="15.9" fill="#ff8ae6"/><rect x="138.0" y="346.0" width="3" height="16.0" fill="#ff8ae6"/><rect x="142.0" y="321.0" width="3" height="49.0" fill="#ff8ae6"/><rect x="398.0" y="106.3" width="3" height="17.0" fill="#ff8ae6"/><rect x="446.0" y="128.4" width="3" height="13.6" fill="#ff8ae6"/><rect x="462.0" y="132.0" width="3" height="15.0" fill="#ff8ae6"/><rect x="470.0" y="136.3" width="3" height="30.6" fill="#ff8ae6"/><rect x="490.0" y="151.0" width="3" height="30.0" fill="#ff8ae6"/><rect x="506.0" y="151.0" width="3" height="10.8" fill="#ff8ae6"/><rect x="3.0" y="92.0" width="3" height="10.0" fill="#63aad3"/><rect x="170.0" y="256.2" width="3" height="7.4" fill="#63aad3"/><rect x="186.0" y="236.4" width="3" height="20.4" fill="#63aad3"/><rect x="194.0" y="221.0" width="3" height="15.4" fill="#63aad3"/><rect x="214.0" y="176.1" width="3" height="10.2" fill="#63aad3"/><rect x="218.0" y="161.2" width="3" height="10.0" fill="#63aad3"/><rect x="222.0" y="156.0" width="3" height="35.2" fill="#63aad3"/><rect x="226.0" y="190.6" width="3" height="5.7" fill="#63aad3"/><rect x="230.0" y="181.0" width="3" height="15.3" fill="#63aad3"/><rect x="246.0" y="145.9" width="3" height="20.4" fill="#63aad3"/><rect x="262.0" y="111.0" width="3" height="5.6" fill="#63aad3"/><rect x="274.0" y="116.0" width="3" height="5.5" fill="#63aad3"/><rect x="282.0" y="96.0" width="3" height="30.5" fill="#63aad3"/><rect x="286.0" y="81.0" width="3" height="15.6" fill="#63aad3"/><rect x="290.0" y="126.0" width="3" height="8.6" fill="#63aad3"/><rect x="302.0" y="106.0" width="3" height="15.5" fill="#63aad3"/><rect x="310.0" y="96.0" width="3" height="15.4" fill="#63aad3"/><rect x="314.0" y="106.0" width="3" height="15.5" fill="#63aad3"/><rect x="342.0" y="111.0" width="3" height="5.6" fill="#63aad3"/><rect x="350.0" y="86.0" width="3" height="30.7" fill="#63aad3"/><rect x="362.0" y="106.0" width="3" height="15.5" fill="#63aad3"/><rect x="366.0" y="81.0" width="3" height="15.6" fill="#63aad3"/><rect x="438.0" y="106.3" width="3" height="11.3" fill="#63aad3"/><rect x="434.0" y="116.0" width="3" height="2.0" fill="#63aad3"/><rect x="510.0" y="136.0" width="3" height="3.0" fill="#63aad3"/><rect x="518.0" y="136.0" width="3" height="2.0" fill="#63aad3"/><rect x="6.0" y="106.0" width="3" height="16.0" fill="#1c1c1c"/><rect x="150.0" y="291.3" width="3" height="6.2" fill="#1c1c1c"/><rect x="158.0" y="281.0" width="3" height="5.8" fill="#1c1c1c"/><rect x="190.0" y="251.0" width="3" height="6.3" fill="#1c1c1c"/><rect x="354.0" y="127.0" width="3" height="4.5" fill="#1c1c1c"/><rect x="382.0" y="116.5" width="3" height="5.1" fill="#1c1c1c"/><rect x="394.5" y="106.3" width="3" height="7.9" fill="#1c1c1c"/><rect x="14" y="146.5" width="3" height="1" fill="#f6a0e0"/><rect x="30" y="151.6" width="3" height="1" fill="#f6a0e0"/><rect x="38" y="201" width="3" height="1" fill="#f6a0e0"/><rect x="46" y="211" width="3" height="1" fill="#f6a0e0"/><rect x="50" y="221" width="3" height="1" fill="#f6a0e0"/><rect x="62" y="216" width="3" height="1" fill="#f6a0e0"/><rect x="66" y="221" width="3" height="1" fill="#f6a0e0"/><rect x="70" y="226" width="3" height="1" fill="#f6a0e0"/><rect x="90" y="236" width="3" height="1" fill="#f6a0e0"/><rect x="98" y="231" width="3" height="1" fill="#f6a0e0"/><rect x="102" y="216" width="3" height="1" fill="#f6a0e0"/><rect x="114" y="291" width="3" height="1" fill="#f6a0e0"/><rect x="118" y="296" width="3" height="1" fill="#f6a0e0"/><rect x="134" y="356" width="3" height="1" fill="#f6a0e0"/><rect x="154" y="276" width="3" height="1" fill="#f6a0e0"/><rect x="162" y="266" width="3" height="1" fill="#f6a0e0"/><rect x="174" y="246" width="3" height="1" fill="#f6a0e0"/><rect x="178" y="236" width="3" height="1" fill="#f6a0e0"/><rect x="182" y="226" width="3" height="1" fill="#f6a0e0"/><rect x="198" y="216" width="3" height="1" fill="#f6a0e0"/><rect x="202" y="211" width="3" height="1" fill="#f6a0e0"/><rect x="206" y="201" width="3" height="1" fill="#f6a0e0"/><rect x="210" y="196" width="3" height="1" fill="#f6a0e0"/><rect x="238" y="196" width="3" height="1" fill="#f6a0e0"/><rect x="250" y="141" width="3" height="1" fill="#f6a0e0"/><rect x="254" y="126" width="3" height="1" fill="#f6a0e0"/><rect x="258" y="116" width="3" height="1" fill="#f6a0e0"/><rect x="266" y="126" width="3" height="1" fill="#f6a0e0"/><rect x="270" y="121" width="3" height="1" fill="#f6a0e0"/><rect x="278" y="136" width="3" height="1" fill="#f6a0e0"/><rect x="294" y="131" width="3" height="1" fill="#f6a0e0"/><rect x="298" y="126" width="3" height="1" fill="#f6a0e0"/><rect x="306" y="141" width="3" height="1" fill="#f6a0e0"/><rect x="318" y="136" width="3" height="1" fill="#f6a0e0"/><rect x="330" y="156" width="3" height="1" fill="#f6a0e0"/><rect x="346" y="96" width="3" height="1" fill="#f6a0e0"/><rect x="358" y="91" width="3" height="1" fill="#f6a0e0"/><rect x="370" y="96" width="3" height="1" fill="#f6a0e0"/><rect x="374" y="106" width="3" height="1" fill="#f6a0e0"/><rect x="378" y="141" width="3" height="1" fill="#f6a0e0"/><rect x="386" y="121" width="3" height="1" fill="#f6a0e0"/><rect x="390" y="121" width="3" height="1" fill="#f6a0e0"/><rect x="402" y="121" width="3" height="1" fill="#f6a0e0"/><rect x="410" y="106" width="3" height="1" fill="#f6a0e0"/><rect x="426" y="131" width="3" height="1" fill="#f6a0e0"/><rect x="430" y="136" width="3" height="1" fill="#f6a0e0"/><rect x="442" y="131" width="3" height="1" fill="#f6a0e0"/><rect x="454" y="146" width="3" height="1" fill="#f6a0e0"/><rect x="474" y="156" width="3" height="1" fill="#f6a0e0"/><rect x="478" y="141" width="3" height="1" fill="#f6a0e0"/><rect x="482" y="141" width="3" height="1" fill="#f6a0e0"/><rect x="494" y="156" width="3" height="1" fill="#f6a0e0"/><rect x="498" y="171" width="3" height="1" fill="#f6a0e0"/><rect x="502" y="156" width="3" height="1" fill="#f6a0e0"/><rect x="514" y="116" width="3" height="1" fill="#f6a0e0"/><rect x="526" y="161" width="3" height="1" fill="#f6a0e0"/><polyline points="2.8,116.4 22.7,117.0 45.3,122.1 68.0,129.5 81.6,135.1 104.2,142.5 124.6,151.0 136.0,158.9 149.6,167.4 164.3,173.7 181.3,178.2 200.0,181.0 212.0,181.8 230.0,181.8" fill="none" stroke="#ee1111" stroke-width="2.6" stroke-linejoin="round" stroke-linecap="round" /><polyline points="243.5,181.6 259.3,180.5 276.3,177.0 288.8,173.7 304.6,170.3 327.3,166.9 350.0,163.8 380.0,158.5 394.0,157.3 428.0,152.7 456.3,150.7 531.0,150.7" fill="none" stroke="#0a0aee" stroke-width="2.6" stroke-linejoin="round" stroke-linecap="round" /><polyline points="212.0,181.8 214.0,181.8" fill="none" stroke="#f5f03a" stroke-width="2.4" stroke-linejoin="round" stroke-linecap="round" /><polyline points="230.0,181.8 243.5,181.8" fill="none" stroke="#f5f03a" stroke-width="2.4" stroke-linejoin="round" stroke-linecap="round" /><polyline points="456.3,150.9 463.0,150.9" fill="none" stroke="#f5f03a" stroke-width="2.4" stroke-linejoin="round" stroke-linecap="round" /><polyline points="467.6,150.9 472.0,150.9" fill="none" stroke="#f5f03a" stroke-width="2.4" stroke-linejoin="round" stroke-linecap="round" /><polyline points="475.6,150.9 479.0,150.9" fill="none" stroke="#f5f03a" stroke-width="2.4" stroke-linejoin="round" stroke-linecap="round" /><polyline points="488.0,150.9 491.4,150.9" fill="none" stroke="#f5f03a" stroke-width="2.4" stroke-linejoin="round" stroke-linecap="round" /><polyline points="519.8,150.9 524.3,150.9" fill="none" stroke="#f5f03a" stroke-width="2.4" stroke-linejoin="round" stroke-linecap="round" /><polyline points="491.4,150.9 507.3,150.9" fill="none" stroke="#ee1111" stroke-width="2.4" stroke-linejoin="round" stroke-linecap="round" /><polyline points="70.3,130.0 81.0,134.6" fill="none" stroke="#ffc4cc" stroke-width="5.5" stroke-linejoin="round" stroke-linecap="round" /><polyline points="106.0,143.0 124.6,151.0 136.0,158.9 148.4,166.9" fill="none" stroke="#ffc4cc" stroke-width="5.5" stroke-linejoin="round" stroke-linecap="round" /><line x1="3" y1="166.4" x2="893" y2="166.4" stroke="#fff" stroke-width="1.4"/><polyline points="3,172.5 68,170 113,168 158.6,166 200,164.4 293,160.6 380,156.5 450.7,153.8 489,152 531,150.7" fill="none" stroke="#fff" stroke-width="1" stroke-dasharray="60,2,3,2,3,2,40,3,3,3" shape-rendering="crispEdges"/><line x1="3" y1="86.6" x2="531" y2="62.5" stroke="#3cc83c" stroke-width="2"/><line x1="3" y1="259.2" x2="531" y2="236.7" stroke="#3cc83c" stroke-width="2"/><polyline points="4.5,125.5 28.3,127.2 39.7,137.4 51.0,148.7 62.3,161.2 73.7,173.7 85.0,186.1 96.3,195.2 104.2,199.5 113.3,207.5 122.4,220.0 130.3,234.7 138.2,248.3 147.3,259.6 158.6,265.3 168.8,268.7" fill="none" stroke="#dc143c" stroke-width="9" stroke-linejoin="round" stroke-linecap="round" /><polyline points="169.0,268.5 176.0,266.0 183.6,262.5 192.0,259.0 200.0,256.0 208.0,250.0 220.0,240.0 232.0,230.0 244.0,221.0 253.0,211.0 259.3,204.0 270.7,186.0 282.0,172.5 293.3,163.0 304.6,153.5 316.0,146.8 325.0,145.5 338.6,146.5 350.0,141.9 361.3,137.4 372.6,129.5 380.0,126.5 394.0,126.5 419.0,123.5 430.0,122.8" fill="none" stroke="#0000ff" stroke-width="7.5" stroke-linejoin="round" stroke-linecap="round" /><polyline points="196.0,260.0 202.0,255.0 208.0,248.5 215.0,240.0 222.0,232.0 232.0,221.5 241.0,212.5 250.0,203.0 259.0,191.0 264.0,183.0" fill="none" stroke="#0000ff" stroke-width="8" stroke-linejoin="round" stroke-linecap="round" /><polyline points="430.0,122.8 437.0,123.3 450.7,125.5 473.3,130.0 490.3,136.9 501.6,145.0 508.4,147.5" fill="none" stroke="#dc143c" stroke-width="7" stroke-linejoin="round" stroke-linecap="round" /><polyline points="517.5,146.0 526.0,148.0 533.0,148.0" fill="none" stroke="#dc143c" stroke-width="8" stroke-linejoin="round" stroke-linecap="round" /><polyline points="4.5,125.5 22.7,126.6 34.0,131.7 45.3,145.3 56.7,163.5 68.0,181.6 79.3,204.0 90.7,216.5 99.7,222.2 104.2,222.2 111.0,229.0 119.0,242.6 127.0,254.0 132.6,268.7 139.4,284.5 147.5,297.5" fill="none" stroke="#dc143c" stroke-width="5.5" stroke-linejoin="round" stroke-linecap="round" /><polyline points="147.5,297.5 158.6,294.0 167.7,291.5 175.0,285.0 181.3,278.9 192.6,267.5 200.0,260.0 208.0,249.0 215.0,236.0 222.0,224.0 232.0,213.0 241.2,204.0 250.3,194.0 259.3,179.3 266.1,165.7 274.0,153.3 282.0,144.2 287.6,137.4 297.8,135.7 304.6,130.6 314.5,123.8" fill="none" stroke="#0000ff" stroke-width="4" stroke-linejoin="round" stroke-linecap="round" /><polyline points="314.8,123.2 338.6,136.3" fill="none" stroke="#dc143c" stroke-width="4.6" stroke-linejoin="round" stroke-linecap="round" /><polyline points="338.6,135.5 350.0,126.1" fill="none" stroke="#0000ff" stroke-width="4" stroke-linejoin="round" stroke-linecap="round" /><polyline points="351.0,124.9 360.2,127.2" fill="none" stroke="#dc143c" stroke-width="5" stroke-linejoin="round" stroke-linecap="round" /><polyline points="361.3,126.1 372.6,117.0 378.7,113.6" fill="none" stroke="#0000ff" stroke-width="4" stroke-linejoin="round" stroke-linecap="round" /><polyline points="378.7,113.6 394.0,115.9 416.7,116.5 428.0,119.9 439.3,121.0 450.7,123.3 467.6,127.8 484.6,132.3 496.0,138.0 507.3,142.5" fill="none" stroke="#dc143c" stroke-width="5.5" stroke-linejoin="round" stroke-linecap="round" /><polyline points="517.5,141.4 526.0,143.0 533.0,145.0" fill="none" stroke="#dc143c" stroke-width="7" stroke-linejoin="round" stroke-linecap="round" /><polyline points="509.0,146.0 512.0,134.0 514.0,142.0 516.0,146.0" fill="none" stroke="#0000ff" stroke-width="3" stroke-linejoin="round" stroke-linecap="round" /><ellipse cx="188.7" cy="261.3" rx="4.6" ry="4" fill="#dc143c"/><ellipse cx="331.3" cy="148.2" rx="6.8" ry="4" fill="#dc143c"/><ellipse cx="397.4" cy="126.7" rx="5" ry="3.6" fill="#dc143c"/><ellipse cx="426.9" cy="123.8" rx="6.5" ry="4.6" fill="#dc143c"/><ellipse cx="503" cy="146" rx="5" ry="4" fill="#dc143c"/><ellipse cx="527" cy="146" rx="7" ry="6" fill="#dc143c"/><line x1="157" y1="376.8" x2="531" y2="376.8" stroke="#d2b4c6" stroke-width="1"/><line x1="531" y1="376.8" x2="893" y2="376.8" stroke="#fff" stroke-width="1"/><path d="M530 40 L540 40 L535 45 Z" fill="#fff"/><rect x="2.5" y="39.5" width="890" height="353" fill="none" stroke="#fff" stroke-width="1"/><defs><filter id="thin" x="-5%" y="-5%" width="110%" height="110%"><feMorphology operator="erode" radius="0.55 0.35"/></filter></defs><text x="81.8" y="89.3" font-family="Liberation Serif" font-size="45" fill="#22142a" textLength="87.5" lengthAdjust="spacingAndGlyphs" opacity=".8">XARD</text><text x="80.2" y="87.8" font-family="Liberation Serif" font-size="45" fill="#dc7cd4" textLength="87.5" lengthAdjust="spacingAndGlyphs">XARD</text><text x="263.4" y="89.9" font-family="Liberation Serif" font-size="46" fill="#22142a" textLength="177" lengthAdjust="spacingAndGlyphs" opacity=".8">UNIVERSE</text><text x="261.8" y="88.4" font-family="Liberation Serif" font-size="46" fill="#c81a82" textLength="177" lengthAdjust="spacingAndGlyphs">UNIVERSE</text><text x="391.2" y="111.7" font-family="Liberation Mono" font-size="13.4" fill="#a9a9a9" textLength="95.8" lengthAdjust="spacing" opacity=".9">VWAP Edition</text></svg><div class="t" style="left:7.2px;top:42.23px;font-size:10px;color:#fff;letter-spacing:-0.602px;">GBPJPY_3S,M1</div><div style="left:115px;top:40px;width:89px;height:20px;background:#6e6e6e;border:1px solid #222;"></div><div class="t" style="left:129.4px;top:43.35px;font-size:14px;color:#32e032;letter-spacing:-0.737px;">guppy ON</div><div style="left:10px;top:293px;width:39px;height:24px;background:#2a2a2a;border:1px solid #6b5d62;"></div><div class="t" style="left:16.6px;top:298.35px;font-size:14px;color:#97978c;letter-spacing:-1.197px;">OFF</div><div style="left:23px;top:367px;width:80px;height:4px;background:#6e6e6e;border-top:1px solid #111"></div><div style="left:3px;top:370px;width:154px;height:22px;background:#be763a;border:1px solid #111;"></div><div class="t" style="left:7.7px;top:371.81px;font-size:19.6px;color:#d2c5bd;letter-spacing:0.694px;font-weight:bold;">DOWN TREND</div><div style="left:893px;top:66.2px;width:4px;height:1px;background:#fff"></div><div class="t" style="left:898.4px;top:61.94px;font-size:10px;color:#fff;letter-spacing:-0.545px;">165.285</div><div style="left:893px;top:116.0px;width:4px;height:1px;background:#fff"></div><div class="t" style="left:898.4px;top:111.73px;font-size:10px;color:#fff;letter-spacing:-0.545px;">165.275</div><div style="left:893px;top:165.8px;width:4px;height:1px;background:#fff"></div><div style="left:893px;top:215.6px;width:4px;height:1px;background:#fff"></div><div class="t" style="left:898.4px;top:211.33px;font-size:10px;color:#fff;letter-spacing:-0.545px;">165.255</div><div style="left:894px;top:160px;width:44px;height:13px;background:#fff"></div><div class="t" style="left:898.4px;top:161.53px;font-size:10px;color:#000;letter-spacing:-0.545px;">165.265</div><svg style="left:0;top:0" width="939" height="400"><text class="cjk" x="540" y="374" font-size="13" fill="#fff">嶒傝</text><text class="cjk" x="594" y="374" font-size="13" fill="#fff">昧</text><text class="cjk" x="391" y="389.5" font-size="12.5" fill="#fff">帳</text></svg><div class="t" style="left:566px;top:362px;font-size:13px;color:#fff;font-family:'Liberation Mono',monospace;letter-spacing:-1px">: 55</div><div class="t" style="left:378.5px;top:380px;font-size:10px;color:#fff;font-family:'Liberation Mono',monospace;letter-spacing:0.4px">23</div><div class="t" style="left:808px;top:350px;font-size:19.3px;font-weight:bold;color:#b4b4b4;">XU-38</div><div class="t" style="left:781px;top:371px;font-size:15px;font-weight:bold;color:#b4b4b4;">Xard Universe</div><div class="t" style="left:771.5px;top:377.5px;font-size:14.3px;color:#fff;">BBwidth: 1.3</div><svg style="left:0;top:393px" width="939" height="480" viewBox="0 393 939 480"><rect x="2.5" y="394.5" width="890" height="124.0" fill="none" stroke="#fff" stroke-width="1"/><line x1="3" y1="412.6" x2="892" y2="412.6" stroke="#c832c8" stroke-width="1" stroke-dasharray="3,3"/><line x1="3" y1="445.2" x2="892" y2="445.2" stroke="#c832c8" stroke-width="1" stroke-dasharray="3,3"/><line x1="3" y1="458.4" x2="892" y2="458.4" stroke="#c832c8" stroke-width="1" stroke-dasharray="3,3"/><line x1="3" y1="471.5" x2="892" y2="471.5" stroke="#c832c8" stroke-width="1" stroke-dasharray="3,3"/><line x1="3" y1="505.3" x2="892" y2="505.3" stroke="#c832c8" stroke-width="1" stroke-dasharray="3,3"/><polyline points="3.0,440.6 15.0,443.1 30.1,444.6 45.1,447.7 60.2,451.4 75.2,458.9 90.2,469.0 105.3,479.0 120.3,484.0 135.3,486.5 150.4,490.3 162.9,486.5 175.4,475.2 185.5,460.2 195.5,445.2 205.5,432.6 215.5,425.1 225.6,420.1 235.6,418.8 245.6,422.6 255.6,423.8 265.7,422.6 275.7,418.8 285.7,412.6 295.7,410.1 305.8,410.1 315.8,411.3 325.8,413.1 338.3,415.1 350.9,418.8 363.4,425.1 375.9,430.6 391.0,435.1 406.0,441.4 421.1,445.2 433.6,447.7 444.1,449.7 450.1,450.7 475.2,458.2 500.3,465.2 515.3,467.2 531.6,466.5" fill="none" stroke="#3c86dc" stroke-width="1" stroke-linejoin="round" stroke-linecap="round" /><polyline points="3.0,459.7 15.0,455.2 30.1,456.4 40.1,465.2 50.1,480.2 62.7,497.8 75.2,507.8 87.7,512.8 95.2,512.3 105.3,507.8 117.8,501.5 130.3,499.8 145.4,499.8 160.4,499.8 175.4,499.0 190.5,495.3 205.5,487.8 220.6,476.5 235.6,460.2 250.6,445.2 260.7,437.6 270.7,432.6 280.7,428.1 295.7,425.1 305.8,425.6 315.8,430.1 325.8,438.9 335.8,447.7 345.9,455.2 355.9,460.2 365.9,460.7 375.9,457.7 391.0,453.9 406.0,451.4 421.1,457.7 433.6,461.4 444.1,462.7 450.1,465.7 470.2,470.2 490.2,475.2 507.8,477.2 520.3,474.0 531.6,470.2" fill="none" stroke="#3c86dc" stroke-width="1" stroke-linejoin="round" stroke-linecap="round" /><polyline points="3.0,450.7 15.0,449.7 27.6,449.7 37.6,452.7 50.1,462.7 65.2,476.5 80.2,485.3 95.2,490.3 110.3,491.5 125.3,492.8 140.4,494.8 155.4,495.3 170.4,491.5 185.5,477.7 200.5,462.7 215.5,450.2 230.6,441.4 245.6,435.1 260.7,430.1 275.7,422.6 288.2,417.6 300.8,417.1 313.3,418.8 325.8,425.1 338.3,432.6 350.9,438.9 363.4,443.1 375.9,444.6 391.0,445.2 406.0,446.4 421.1,450.7 433.6,453.9 444.1,455.7 462.7,461.4 487.7,467.2 507.8,471.5 522.8,471.5 531.6,470.2" fill="none" stroke="#f0e646" stroke-width="1" stroke-linejoin="round" stroke-linecap="round" /><polyline points="3.0,442.1 10.0,445.2 25.1,450.7 32.6,457.7 40.1,472.7 50.1,492.8 62.7,502.8 75.2,509.8 82.7,507.8 90.2,501.5 97.7,500.3 105.3,493.3 115.3,492.8 125.3,492.8 135.3,499.0 142.9,504.0 150.4,499.0 155.4,492.8 162.9,487.8 170.4,472.7 177.9,452.7 185.5,442.1 195.5,437.6 205.5,428.9 218.0,422.6 228.1,421.3 235.6,420.1 243.1,423.8 250.6,422.6 260.7,418.8 268.2,411.3 278.2,406.3 288.2,405.1 292.0,407.6 298.2,417.6 305.8,422.6 313.3,426.4 320.8,435.1 328.3,445.2 335.8,451.4 345.9,455.2 355.9,458.9 363.4,455.2 370.9,446.4 378.4,443.1 386.0,446.4 393.5,448.9 401.0,449.7 408.5,456.4 413.5,462.2 423.6,463.2 433.6,464.7 444.1,464.7 445.1,465.2 455.1,470.2 460.2,472.7 467.7,470.2 475.2,474.7 485.2,474.0 495.2,476.5 507.8,478.2 515.3,470.2 522.8,467.7 531.6,467.2" fill="none" stroke="#32f032" stroke-width="2" stroke-linejoin="round" stroke-linecap="round" /><polyline points="3.0,452.7 15.0,448.9 30.1,448.2 37.6,455.2 45.1,470.2 52.6,485.3 62.7,497.8 75.2,505.3 87.7,509.1 100.3,505.3 112.8,497.8 122.8,494.0 132.8,493.3 145.4,496.5 155.4,499.0 162.9,495.3 170.4,484.0 177.9,462.7 185.5,445.2 193.0,438.9 205.5,432.6 218.0,427.6 230.6,423.8 245.6,422.1 260.7,421.3 270.7,417.6 280.7,412.6 290.7,407.6 300.8,407.1 310.8,413.8 318.3,422.6 325.8,435.1 333.3,445.2 343.4,452.7 355.9,458.2 365.9,457.7 375.9,453.2 386.0,449.7 398.5,447.7 408.5,448.9 418.5,455.2 428.6,460.2 438.6,463.9 444.1,464.7 455.1,466.5 472.7,471.5 490.2,474.7 505.3,476.5 515.3,476.5 525.3,473.2 531.6,471.5" fill="none" stroke="#f01414" stroke-width="2" stroke-linejoin="round" stroke-linecap="round" /><rect x="2.5" y="520.5" width="890" height="139.0" fill="none" stroke="#fff" stroke-width="1"/><polyline points="3.4,552.2 13.5,552.2 23.6,554.7 33.8,552.5 45.6,553.0 57.4,559.3 67.6,560.3 72.6,564.0 77.7,574.1 82.8,591.0 87.0,602.8 91.2,605.9 96.3,601.1 101.4,589.3 106.4,581.7 111.5,579.5 128.4,579.5 145.3,579.2 152.0,574.1 158.8,564.0 167.2,555.5 175.7,545.4 184.1,537.8 194.3,534.9 202.7,531.0 211.1,527.7 217.9,531.9 223.0,540.3 228.0,545.4 236.5,542.9 250.0,541.7 263.5,541.2 273.6,539.5 279.9,540.0 280.0,539.5 290.1,541.2 300.3,539.5 310.4,537.3 318.9,537.8 325.6,532.7 331.5,531.0 337.4,533.6 344.2,539.5 352.6,544.6 361.1,550.5 367.0,554.2 373.8,548.8 379.7,546.2 386.4,546.8 394.9,554.2 405.0,556.4 415.1,558.6 425.3,560.3 435.4,564.0 445.5,565.3 450.6,570.7 455.7,580.0 460.7,586.8 464.1,589.3" fill="none" stroke="#a8d0f0" stroke-width="1" stroke-linejoin="round" stroke-linecap="round" /><polyline points="3.4,628.5 15.2,627.8 25.3,624.5 32.1,626.5 40.5,636.6 50.7,644.2 62.5,650.1 72.6,652.7 77.7,650.1 82.8,640.8 87.0,634.6 94.6,634.9 101.4,640.0 108.1,644.7 118.2,641.7 128.4,639.2 141.9,640.3 155.4,637.5 168.9,638.3 182.4,640.3 190.9,640.0 199.3,633.2 207.8,621.4 214.5,609.6 219.6,594.4 224.7,580.0 228.9,573.3 234.8,577.5 243.2,584.3 256.8,585.6 266.9,585.1 273.6,582.6 279.9,582.6 280.0,582.6 290.1,582.9 295.2,594.4 300.3,599.5 307.0,600.3 315.5,598.1 320.5,599.5 327.3,613.0 334.1,624.0 340.8,630.2 347.6,630.7 359.4,629.9 374.6,629.9 381.4,626.5 389.8,627.3 399.9,630.7 408.4,626.5 416.8,618.0 423.6,615.5 430.3,618.0 435.4,621.4 447.2,621.4 455.7,618.9 465.8,619.4 475.9,620.6 484.4,619.7 492.8,620.6 499.6,624.5 508.0,624.0 514.8,624.0 523.2,627.3 531.7,626.1" fill="none" stroke="#a8d0f0" stroke-width="1" stroke-linejoin="round" stroke-linecap="round" /><polyline points="480.2,587.6 485.2,581.7 491.1,580.0 499.6,582.2 506.4,583.4 513.1,580.9 518.2,572.4 523.2,567.7 530.8,567.7" fill="none" stroke="#a8d0f0" stroke-width="1" stroke-linejoin="round" stroke-linecap="round" /><line x1="3" y1="575" x2="892" y2="575" stroke="#c01cc0" stroke-width="1.3"/><line x1="3" y1="584.4" x2="892" y2="584.4" stroke="#c01cc0" stroke-width="1.3"/><line x1="3" y1="588.5" x2="892" y2="588.5" stroke="#c01cc0" stroke-width="1.3"/><line x1="3" y1="592.8" x2="892" y2="592.8" stroke="#c01cc0" stroke-width="1.3"/><line x1="3" y1="603.3" x2="892" y2="603.3" stroke="#c01cc0" stroke-width="1.3"/><polyline points="254.2,585.1 267.7,585.1" fill="none" stroke="#d890f0" stroke-width="1.4" stroke-linejoin="round" stroke-linecap="round" /><polyline points="3.4,590.7 16.9,590.2 30.4,589.0 38.9,593.5 49.0,599.5 57.4,603.7 67.6,606.2 74.3,611.3 81.1,616.4 87.8,619.4 94.6,618.0 103.0,613.8 111.5,611.3 121.6,609.6 135.1,609.6 147.0,609.6 153.7,606.2 162.2,597.8 172.3,591.9 182.4,588.0 192.6,585.6 201.0,580.9 209.5,572.4 217.9,564.0 224.7,558.1 233.1,559.8 241.6,562.6 250.0,563.6 260.1,563.6 268.6,562.0 277.0,560.9 280.0,561.5 290.1,562.3 298.6,567.4 307.0,570.4 315.5,568.7 323.9,569.9 332.4,576.7 340.8,583.4 349.3,586.8 357.7,587.6 366.1,591.0 372.9,590.2 379.7,586.8 386.4,587.3 394.9,590.2 405.0,591.9 415.1,589.0 423.6,587.6 432.0,591.0 442.2,593.5 452.3,597.8 460.7,603.7 470.9,604.5 481.0,603.7 487.8,601.1 497.9,602.0 508.0,602.8 516.5,599.5 523.2,596.9 531.7,596.4" fill="none" stroke="#f0e646" stroke-width="1" stroke-linejoin="round" stroke-linecap="round" /><polyline points="3.4,548.8 7.6,562.3 11.8,591.0 16.0,618.0 19.4,618.9 23.6,613.0 27.9,611.3 32.1,619.7 36.3,627.3 43.9,627.8 52.4,627.8 57.4,622.3 63.3,619.7 69.3,623.1 76.0,624.5 81.1,618.9 87.0,604.5 92.9,596.1 99.7,589.3 103.9,572.4 107.3,569.9 110.6,582.6 114.9,602.8 118.2,620.6 123.3,620.6 130.1,623.1 136.8,627.8 141.9,626.5 147.0,614.7 151.2,596.1 154.6,572.4 158.8,557.2 163.0,556.4 168.1,559.8 172.3,557.2 177.4,549.6 183.3,548.8 187.5,557.2 191.7,568.2 195.9,573.3 200.2,564.0 203.5,553.0 209.5,553.9 214.5,555.5 220.4,553.0 224.7,554.7 228.9,562.3 234.0,575.8 239.0,585.1 243.2,587.6 247.5,579.2 251.7,564.0 255.9,551.3 261.8,547.1 267.7,550.5 273.6,554.7 279.9,559.3 280.0,559.3 287.6,559.8 291.8,570.7 296.0,596.1 299.4,607.1 302.8,599.5 307.0,575.8 311.2,560.6 315.5,559.8 319.7,577.5 323.1,604.5 327.3,621.4 332.4,626.8 336.6,625.6 341.7,613.0 345.9,585.9 350.9,568.2 355.2,569.9 359.4,582.6 362.8,589.3 366.1,582.6 370.4,562.3 374.6,558.6 378.8,565.7 383.0,580.9 388.1,596.1 393.2,602.0 398.2,604.5 404.2,609.6 409.2,607.9 415.1,599.5 420.2,595.2 423.6,590.2 427.8,596.1 431.2,610.4 435.4,611.3 439.6,601.1 443.9,594.4 448.9,599.5 454.0,609.6 459.9,620.6 464.1,614.7 467.5,601.1 471.7,597.8 475.9,602.8 480.2,602.8 483.5,589.3 487.8,577.5 491.1,587.6 495.4,607.9 499.6,617.7 504.7,611.3 509.7,592.7 514.8,574.1 519.9,564.0 524.1,569.1 528.3,587.6 531.7,598.6" fill="none" stroke="#32f032" stroke-width="2" stroke-linejoin="round" stroke-linecap="round" /><polyline points="3.4,575.8 10.1,574.1 16.0,576.7 21.1,584.3 26.2,594.4 32.1,609.6 38.9,620.6 47.3,623.1 54.1,626.5 62.5,625.6 70.9,623.1 79.4,622.3 87.8,617.2 96.3,608.8 103.0,596.1 109.0,586.8 114.9,589.3 121.6,594.4 126.7,601.1 131.8,611.3 136.8,619.7 141.9,623.1 147.0,622.3 152.9,614.7 158.8,601.1 164.7,584.3 170.6,569.1 176.5,558.9 182.4,554.7 188.3,555.5 195.9,559.8 204.4,560.3 212.8,560.6 219.6,556.4 225.5,554.2 231.4,558.1 237.3,564.8 243.2,570.7 250.0,575.0 255.9,573.3 262.7,566.5 268.6,558.9 273.6,553.9 278.7,551.3 280.0,553.0 286.8,555.2 293.5,562.3 299.4,573.3 305.3,580.0 314.6,580.9 322.2,584.6 329.0,589.3 334.9,599.5 340.0,609.6 345.0,613.8 349.3,609.6 354.3,599.5 361.1,589.3 367.0,580.9 372.1,574.1 377.1,572.8 383.9,574.5 390.6,576.7 396.6,582.6 401.6,592.7 406.7,600.3 413.4,603.7 420.2,603.2 427.0,600.3 435.4,601.1 443.0,599.8 449.8,602.8 456.5,606.6 465.8,607.1 474.3,607.9 480.2,607.1 485.2,599.5 491.1,594.1 497.1,597.8 503.0,599.8 510.6,599.5 516.5,596.9 521.6,591.0 526.6,584.3 531.7,582.6" fill="none" stroke="#f01414" stroke-width="2.4" stroke-linejoin="round" stroke-linecap="round" /><rect x="2.5" y="661.5" width="890" height="114.0" fill="none" stroke="#fff" stroke-width="1"/><line x1="3" y1="714.5" x2="892" y2="714.5" stroke="#c01cc0" stroke-width="1.3" stroke-dasharray="4,3"/><polyline points="3.4,706.5 16.9,706.5 38.9,707.7 47.3,704.0 59.1,696.4 70.9,689.6 82.8,682.9 91.2,679.5 104.7,678.6 125.0,678.6 135.1,675.3 143.6,671.9 152.0,671.0 163.9,671.9 175.7,676.1 185.8,684.6 195.9,694.7 204.4,702.3 214.5,704.0 223.0,698.1 233.1,693.0 244.9,689.6 256.8,685.4 268.6,679.5 279.9,675.8 280.0,676.1 290.1,673.6 300.3,674.9 310.4,676.1 322.2,680.0 334.1,686.2 347.6,693.0 359.4,698.9 367.8,701.5 376.3,700.3 388.1,700.3 401.6,700.3 411.8,703.1 425.3,706.5 437.1,709.9 448.9,711.6 459.1,712.8 467.5,712.4 475.9,709.9 487.8,708.7 499.6,705.7 509.7,703.6 516.5,704.3 528.3,704.5" fill="none" stroke="#9ac832" stroke-width="1" stroke-linejoin="round" stroke-linecap="round" stroke-dasharray="2.5,4"/><polyline points="3.4,722.9 20.3,722.6 42.2,722.6 50.7,727.6 62.5,734.4 74.3,742.0 86.1,747.9 98.0,751.3 114.9,751.6 128.4,751.6 138.5,756.4 148.6,761.1 158.8,761.4 168.9,758.9 179.1,753.0 189.2,742.8 199.3,732.7 209.5,725.1 214.5,725.9 224.7,731.9 236.5,737.8 248.3,742.8 260.1,747.1 273.6,752.1 279.9,753.8 280.0,753.0 291.8,756.7 303.6,754.7 315.5,752.6 327.3,747.1 339.1,741.1 349.3,736.1 357.7,731.0 367.8,728.5 381.4,730.2 398.2,729.0 411.8,726.8 423.6,722.6 437.1,720.0 448.9,718.3 459.1,717.8 470.9,718.3 481.0,720.0 491.1,721.7 503.0,724.6 513.1,725.6 528.3,725.1" fill="none" stroke="#e070b8" stroke-width="1" stroke-linejoin="round" stroke-linecap="round" stroke-dasharray="2.5,4"/><polyline points="3.4,703.1 7.6,703.6 15.2,709.9 23.6,712.4 31.2,716.1 38.9,726.8 49.8,739.0 54.1,739.5 60.8,744.9 70.1,747.1 77.7,753.8 83.6,754.3" fill="none" stroke="#ee1c1c" stroke-width="2.2" stroke-linejoin="round" stroke-linecap="round" /><polyline points="83.6,754.3 96.3,751.3 103.0,746.2 107.3,745.9" fill="none" stroke="#0c8a0c" stroke-width="2.2" stroke-linejoin="round" stroke-linecap="round" /><polyline points="107.3,745.9 111.5,751.3 118.2,753.8 120.8,754.3" fill="none" stroke="#ee1c1c" stroke-width="2.2" stroke-linejoin="round" stroke-linecap="round" /><polyline points="120.8,754.3 123.3,754.3" fill="none" stroke="#0c8a0c" stroke-width="2.2" stroke-linejoin="round" stroke-linecap="round" /><polyline points="123.3,754.3 131.8,762.3 139.4,769.5" fill="none" stroke="#ee1c1c" stroke-width="2.2" stroke-linejoin="round" stroke-linecap="round" /><polyline points="139.4,769.5 143.6,769.0 149.5,763.1 158.8,751.3 167.2,744.5 175.7,732.7 184.1,720.0 192.6,717.5 202.7,704.0 211.1,698.6 219.6,687.9 227.2,686.8" fill="none" stroke="#0c8a0c" stroke-width="2.2" stroke-linejoin="round" stroke-linecap="round" /><polyline points="227.2,686.8 231.4,686.8" fill="none" stroke="#ee1c1c" stroke-width="2.2" stroke-linejoin="round" stroke-linecap="round" /><polyline points="231.4,686.8 234.8,686.8" fill="none" stroke="#0c8a0c" stroke-width="2.2" stroke-linejoin="round" stroke-linecap="round" /><polyline points="234.8,686.8 239.9,686.8" fill="none" stroke="#ee1c1c" stroke-width="2.2" stroke-linejoin="round" stroke-linecap="round" /><polyline points="239.9,686.8 244.9,686.2 253.4,679.5 261.8,673.6 270.3,671.0" fill="none" stroke="#0c8a0c" stroke-width="2.2" stroke-linejoin="round" stroke-linecap="round" /><polyline points="270.3,671.0 277.0,671.0" fill="none" stroke="#ee1c1c" stroke-width="2.2" stroke-linejoin="round" stroke-linecap="round" /><polyline points="277.0,671.0 285.5,671.9" fill="none" stroke="#0c8a0c" stroke-width="2.2" stroke-linejoin="round" stroke-linecap="round" /><polyline points="281.7,671.9 288.4,673.6" fill="none" stroke="#0c8a0c" stroke-width="2.2" stroke-linejoin="round" stroke-linecap="round" /><polyline points="288.4,673.6 296.9,680.0 303.6,680.3" fill="none" stroke="#ee1c1c" stroke-width="2.2" stroke-linejoin="round" stroke-linecap="round" /><polyline points="303.6,680.3 311.2,678.6" fill="none" stroke="#0c8a0c" stroke-width="2.2" stroke-linejoin="round" stroke-linecap="round" /><polyline points="311.2,678.6 325.6,693.0 335.7,703.1 340.0,703.1" fill="none" stroke="#ee1c1c" stroke-width="2.2" stroke-linejoin="round" stroke-linecap="round" /><polyline points="340.0,703.1 348.4,699.3" fill="none" stroke="#0c8a0c" stroke-width="2.2" stroke-linejoin="round" stroke-linecap="round" /><polyline points="348.4,699.3 359.4,703.1" fill="none" stroke="#ee1c1c" stroke-width="2.2" stroke-linejoin="round" stroke-linecap="round" /><polyline points="359.4,703.1 364.5,702.3 372.9,696.9 377.1,696.4" fill="none" stroke="#0c8a0c" stroke-width="2.2" stroke-linejoin="round" stroke-linecap="round" /><polyline points="377.1,696.4 388.1,703.1 394.9,704.0 400.8,708.2 405.0,708.2" fill="none" stroke="#ee1c1c" stroke-width="2.2" stroke-linejoin="round" stroke-linecap="round" /><polyline points="405.0,708.2 410.1,708.2" fill="none" stroke="#0c8a0c" stroke-width="2.2" stroke-linejoin="round" stroke-linecap="round" /><polyline points="410.1,708.2 415.1,709.1" fill="none" stroke="#ee1c1c" stroke-width="2.2" stroke-linejoin="round" stroke-linecap="round" /><polyline points="415.1,709.1 420.2,709.1" fill="none" stroke="#0c8a0c" stroke-width="2.2" stroke-linejoin="round" stroke-linecap="round" /><polyline points="420.2,709.1 427.0,710.7 432.0,713.3" fill="none" stroke="#ee1c1c" stroke-width="2.2" stroke-linejoin="round" stroke-linecap="round" /><polyline points="432.0,713.3 436.2,713.3" fill="none" stroke="#0c8a0c" stroke-width="2.2" stroke-linejoin="round" stroke-linecap="round" /><polyline points="436.2,713.3 446.4,714.1 459.1,719.2" fill="none" stroke="#ee1c1c" stroke-width="2.2" stroke-linejoin="round" stroke-linecap="round" /><polyline points="459.1,719.2 466.7,718.9" fill="none" stroke="#0c8a0c" stroke-width="2.2" stroke-linejoin="round" stroke-linecap="round" /><polyline points="466.7,718.9 472.6,722.9" fill="none" stroke="#ee1c1c" stroke-width="2.2" stroke-linejoin="round" stroke-linecap="round" /><polyline points="472.6,722.9 486.9,722.1" fill="none" stroke="#0c8a0c" stroke-width="2.2" stroke-linejoin="round" stroke-linecap="round" /><polyline points="486.9,722.1 497.1,729.3 499.6,729.3" fill="none" stroke="#ee1c1c" stroke-width="2.2" stroke-linejoin="round" stroke-linecap="round" /><polyline points="499.6,729.3 508.0,727.6 515.6,720.9 519.9,720.0" fill="none" stroke="#0c8a0c" stroke-width="2.2" stroke-linejoin="round" stroke-linecap="round" /><polyline points="519.9,720.0 526.6,721.2 531.7,722.2" fill="none" stroke="#ee1c1c" stroke-width="2.2" stroke-linejoin="round" stroke-linecap="round" /><rect x="2.5" y="778.5" width="890" height="12.0" fill="none" stroke="#fff" stroke-width="1"/><rect x="3" y="793" width="2" height="29" fill="#2be8a0"/><rect x="6" y="822" width="3" height="14.5" fill="#d6d6d6"/><rect x="10" y="822" width="3" height="29" fill="#d81841"/><rect x="14" y="822" width="3" height="29" fill="#d81841"/><rect x="18" y="822" width="3" height="29" fill="#d81841"/><rect x="22" y="822" width="3" height="29" fill="#d81841"/><rect x="26" y="822" width="3" height="29" fill="#d81841"/><rect x="30" y="822" width="3" height="29" fill="#d81841"/><rect x="34" y="822" width="3" height="29" fill="#d81841"/><rect x="38" y="822" width="3" height="29" fill="#d81841"/><rect x="42" y="822" width="3" height="29" fill="#d81841"/><rect x="46" y="822" width="3" height="29" fill="#d81841"/><rect x="50" y="822" width="3" height="29" fill="#d81841"/><rect x="54" y="822" width="3" height="29" fill="#d81841"/><rect x="58" y="822" width="3" height="29" fill="#d81841"/><rect x="62" y="822" width="3" height="29" fill="#d81841"/><rect x="66" y="822" width="3" height="29" fill="#d81841"/><rect x="70" y="822" width="3" height="29" fill="#d81841"/><rect x="74" y="822" width="3" height="29" fill="#d81841"/><rect x="78" y="822" width="3" height="29" fill="#d81841"/><rect x="82" y="822" width="3" height="29" fill="#d81841"/><rect x="86" y="822" width="3" height="29" fill="#d81841"/><rect x="90" y="822" width="3" height="29" fill="#d81841"/><rect x="94" y="822" width="3" height="29" fill="#d81841"/><rect x="98" y="822" width="3" height="29" fill="#d81841"/><rect x="102" y="808" width="3" height="14" fill="#d6d6d6"/><rect x="106" y="822" width="3" height="29" fill="#d81841"/><rect x="110" y="822" width="3" height="29" fill="#d81841"/><rect x="114" y="822" width="3" height="29" fill="#d81841"/><rect x="118" y="822" width="3" height="29" fill="#d81841"/><rect x="122" y="822" width="3" height="29" fill="#d81841"/><rect x="126" y="822" width="3" height="29" fill="#d81841"/><rect x="130" y="822" width="3" height="29" fill="#d81841"/><rect x="134" y="822" width="3" height="29" fill="#d81841"/><rect x="138" y="822" width="3" height="29" fill="#d81841"/><rect x="142" y="822" width="3" height="29" fill="#d81841"/><rect x="146" y="822" width="3" height="29" fill="#d81841"/><rect x="150" y="808" width="3" height="14" fill="#d6d6d6"/><rect x="154" y="808" width="3" height="14" fill="#d6d6d6"/><rect x="158" y="808" width="3" height="14" fill="#d6d6d6"/><rect x="162" y="808" width="3" height="14" fill="#d6d6d6"/><rect x="166" y="808" width="3" height="14" fill="#d6d6d6"/><rect x="170" y="793" width="3" height="29" fill="#2be8a0"/><rect x="174" y="793" width="3" height="29" fill="#2be8a0"/><rect x="178" y="793" width="3" height="29" fill="#2be8a0"/><rect x="182" y="793" width="3" height="29" fill="#2be8a0"/><rect x="186" y="793" width="3" height="29" fill="#2be8a0"/><rect x="190" y="808" width="3" height="14" fill="#d6d6d6"/><rect x="194" y="793" width="3" height="29" fill="#2be8a0"/><rect x="198" y="793" width="3" height="29" fill="#2be8a0"/><rect x="202" y="793" width="3" height="29" fill="#2be8a0"/><rect x="206" y="793" width="3" height="29" fill="#2be8a0"/><rect x="210" y="793" width="3" height="29" fill="#2be8a0"/><rect x="214" y="793" width="3" height="29" fill="#2be8a0"/><rect x="218" y="793" width="3" height="29" fill="#2be8a0"/><rect x="222" y="793" width="3" height="29" fill="#2be8a0"/><rect x="226" y="793" width="3" height="29" fill="#2be8a0"/><rect x="230" y="793" width="3" height="29" fill="#2be8a0"/><rect x="234" y="793" width="3" height="29" fill="#2be8a0"/><rect x="238" y="793" width="3" height="29" fill="#2be8a0"/><rect x="242" y="793" width="3" height="29" fill="#2be8a0"/><rect x="246" y="793" width="3" height="29" fill="#2be8a0"/><rect x="250" y="793" width="3" height="29" fill="#2be8a0"/><rect x="254" y="793" width="3" height="29" fill="#2be8a0"/><rect x="258" y="793" width="3" height="29" fill="#2be8a0"/><rect x="262" y="793" width="3" height="29" fill="#2be8a0"/><rect x="266" y="793" width="3" height="29" fill="#2be8a0"/><rect x="270" y="793" width="3" height="29" fill="#2be8a0"/><rect x="274" y="793" width="3" height="29" fill="#2be8a0"/><rect x="278" y="793" width="3" height="29" fill="#2be8a0"/><rect x="282" y="793" width="3" height="29" fill="#2be8a0"/><rect x="286" y="793" width="3" height="29" fill="#2be8a0"/><rect x="290" y="793" width="3" height="29" fill="#2be8a0"/><rect x="294" y="793" width="3" height="29" fill="#2be8a0"/><rect x="298" y="793" width="3" height="29" fill="#2be8a0"/><rect x="302" y="793" width="3" height="29" fill="#2be8a0"/><rect x="306" y="793" width="3" height="29" fill="#2be8a0"/><rect x="310" y="793" width="3" height="29" fill="#2be8a0"/><rect x="314" y="793" width="3" height="29" fill="#2be8a0"/><rect x="318" y="822" width="3" height="14.5" fill="#d6d6d6"/><rect x="322" y="822" width="3" height="14.5" fill="#d6d6d6"/><rect x="326" y="822" width="3" height="14.5" fill="#d6d6d6"/><rect x="330" y="822" width="3" height="29" fill="#d81841"/><rect x="334" y="822" width="3" height="29" fill="#d81841"/><rect x="338" y="822" width="3" height="14.5" fill="#d6d6d6"/><rect x="342" y="793" width="3" height="29" fill="#2be8a0"/><rect x="346" y="793" width="3" height="29" fill="#2be8a0"/><rect x="350" y="793" width="3" height="29" fill="#2be8a0"/><rect x="354" y="822" width="3" height="14.5" fill="#d6d6d6"/><rect x="358" y="822" width="3" height="14.5" fill="#d6d6d6"/><rect x="362" y="793" width="3" height="29" fill="#2be8a0"/><rect x="366" y="793" width="3" height="29" fill="#2be8a0"/><rect x="370" y="793" width="3" height="29" fill="#2be8a0"/><rect x="374" y="793" width="3" height="29" fill="#2be8a0"/><rect x="378" y="793" width="3" height="29" fill="#2be8a0"/><rect x="382" y="822" width="3" height="14.5" fill="#d6d6d6"/><rect x="386" y="822" width="3" height="14.5" fill="#d6d6d6"/><rect x="390" y="822" width="3" height="14.5" fill="#d6d6d6"/><rect x="394" y="822" width="3" height="14.5" fill="#d6d6d6"/><rect x="398" y="822" width="3" height="29" fill="#d81841"/><rect x="402" y="822" width="3" height="14.5" fill="#d6d6d6"/><rect x="406" y="793" width="3" height="29" fill="#2be8a0"/><rect x="410" y="822" width="3" height="14.5" fill="#d6d6d6"/><rect x="414" y="822" width="3" height="14.5" fill="#d6d6d6"/><rect x="418" y="793" width="3" height="29" fill="#2be8a0"/><rect x="422" y="822" width="3" height="14.5" fill="#d6d6d6"/><rect x="426" y="822" width="3" height="29" fill="#d81841"/><rect x="430" y="822" width="3" height="29" fill="#d81841"/><rect x="434" y="793" width="3" height="29" fill="#2be8a0"/><rect x="438" y="793" width="3" height="29" fill="#2be8a0"/><rect x="442" y="822" width="3" height="29" fill="#d81841"/><rect x="446" y="822" width="3" height="29" fill="#d81841"/><rect x="450" y="822" width="3" height="29" fill="#d81841"/><rect x="454" y="822" width="3" height="29" fill="#d81841"/><rect x="458" y="822" width="3" height="29" fill="#d81841"/><rect x="462" y="822" width="3" height="29" fill="#d81841"/><rect x="466" y="808" width="3" height="14" fill="#d6d6d6"/><rect x="470" y="822" width="3" height="29" fill="#d81841"/><rect x="474" y="822" width="3" height="29" fill="#d81841"/><rect x="478" y="808" width="3" height="14" fill="#d6d6d6"/><rect x="482" y="822" width="3" height="29" fill="#d81841"/><rect x="486" y="822" width="3" height="29" fill="#d81841"/><rect x="490" y="822" width="3" height="29" fill="#d81841"/><rect x="494" y="822" width="3" height="29" fill="#d81841"/><rect x="498" y="822" width="3" height="29" fill="#d81841"/><rect x="502" y="822" width="3" height="29" fill="#d81841"/><rect x="506" y="822" width="3" height="29" fill="#d81841"/><rect x="510" y="793" width="3" height="29" fill="#2be8a0"/><rect x="514" y="793" width="3" height="29" fill="#2be8a0"/><rect x="518" y="793" width="3" height="29" fill="#2be8a0"/><rect x="522" y="822" width="3" height="29" fill="#d81841"/><rect x="526" y="822" width="3" height="29" fill="#d81841"/><rect x="530" y="822" width="3" height="29" fill="#d81841"/><path d="M2.5 792.5 L892.5 792.5 L892.5 851.5 L2.5 851.5 Z" fill="none" stroke="#fff" stroke-width="1"/><line x1="3.5" y1="851.5" x2="3.5" y2="855" stroke="#fff" stroke-width="1"/><line x1="67.5" y1="851.5" x2="67.5" y2="855" stroke="#fff" stroke-width="1"/><line x1="131.5" y1="851.5" x2="131.5" y2="855" stroke="#fff" stroke-width="1"/><line x1="195.5" y1="851.5" x2="195.5" y2="855" stroke="#fff" stroke-width="1"/><line x1="259.5" y1="851.5" x2="259.5" y2="855" stroke="#fff" stroke-width="1"/><line x1="323.5" y1="851.5" x2="323.5" y2="855" stroke="#fff" stroke-width="1"/><line x1="387.5" y1="851.5" x2="387.5" y2="855" stroke="#fff" stroke-width="1"/><line x1="451.5" y1="851.5" x2="451.5" y2="855" stroke="#fff" stroke-width="1"/><line x1="515.5" y1="851.5" x2="515.5" y2="855" stroke="#fff" stroke-width="1"/></svg><div class="t" style="left:7.5px;top:398.54px;font-size:10px;color:#fff;letter-spacing:-0.257px;">tdi1 M1 TDI of Slow rsi of JMA (10,0,0) 46.9727 45.6191 44.2655 47.0467 45.2180</div><div class="t" style="left:7.6px;top:524.74px;font-size:10px;color:#fff;letter-spacing:-0.240px;">TDI Alerts v 77.005 40.065 3.124 36.437 57.361</div><div class="t" style="left:7.4px;top:665.43px;font-size:10px;color:#fff;letter-spacing:-0.366px;">Spb f1 GBPJPY_3S M1 - Super passband filter (40.00,60.00,10) 0.0009 0.0000 -0.0009 -0.0007 -0.0007</div><div class="t" style="left:10.3px;top:796.74px;font-size:10px;color:#fff;letter-spacing:-0.205px;">EMA + EMA of  XU histo (15,30) -1.000</div><div class="t" style="left:68.0px;top:780.24px;font-size:10px;color:#fff;letter-spacing:0.000px;">2</div><div class="t" style="left:2.5px;top:855.53px;font-size:10px;color:#fff;letter-spacing:-0.490px;">9 Sep 2022</div><div class="t" style="left:66.5px;top:855.53px;font-size:10px;color:#fff;letter-spacing:-0.374px;">9 Sep 17:23</div><div class="t" style="left:130.5px;top:855.53px;font-size:10px;color:#fff;letter-spacing:-0.374px;">9 Sep 17:24</div><div class="t" style="left:194.5px;top:855.53px;font-size:10px;color:#fff;letter-spacing:-0.374px;">9 Sep 17:26</div><div class="t" style="left:258.5px;top:855.53px;font-size:10px;color:#fff;letter-spacing:-0.374px;">9 Sep 17:27</div><div class="t" style="left:322.5px;top:855.53px;font-size:10px;color:#fff;letter-spacing:-0.374px;">9 Sep 17:28</div><div class="t" style="left:386.5px;top:855.53px;font-size:10px;color:#fff;letter-spacing:-0.374px;">9 Sep 17:29</div><div class="t" style="left:450.5px;top:855.53px;font-size:10px;color:#fff;letter-spacing:-0.374px;">9 Sep 17:31</div><div class="t" style="left:514.5px;top:855.53px;font-size:10px;color:#fff;letter-spacing:-0.374px;">9 Sep 17:32</div><div class="t" style="left:896.0px;top:663.74px;font-size:10px;color:#fff;letter-spacing:-0.470px;">0.0045</div><div style="left:893px;top:668.2px;width:2px;height:1px;background:#fff"></div><div class="t" style="left:896.0px;top:709.53px;font-size:10px;color:#fff;letter-spacing:-0.503px;">0.00</div><div style="left:893px;top:714.0px;width:2px;height:1px;background:#fff"></div><div class="t" style="left:896.0px;top:763.43px;font-size:10px;color:#fff;letter-spacing:-0.448px;">-0.0052</div><div style="left:893px;top:767.9px;width:2px;height:1px;background:#fff"></div><div class="t" style="left:896.0px;top:795.03px;font-size:10px;color:#fff;letter-spacing:0.000px;">1</div><div style="left:893px;top:799.5px;width:2px;height:1px;background:#fff"></div><div class="t" style="left:896.0px;top:817.43px;font-size:10px;color:#fff;letter-spacing:-0.503px;">0.00</div><div style="left:893px;top:821.9px;width:2px;height:1px;background:#fff"></div><div class="t" style="left:896.0px;top:840.24px;font-size:10px;color:#fff;letter-spacing:-0.860px;">-1</div><div style="left:893px;top:844.7px;width:2px;height:1px;background:#fff"></div><div class="t" style="left:896.0px;top:780.74px;font-size:10px;color:#fff;letter-spacing:-0.503px;">2.00</div><div style="left:843px;top:794px;width:50px;height:18px;background:#6e6e6e;border:1px solid #999;border-radius:2px"></div><div class="t" style="left:853.2px;top:797.14px;font-size:12px;color:#e8e8e8;letter-spacing:-0.594px;">xu h on</div><svg style="left:957px;top:36px" width="819" height="837" viewBox="957 36 819 837"><line x1="993.5" y1="40" x2="993.5" y2="648" stroke="#8c96a0" stroke-width="1" stroke-dasharray="3,3"/><line x1="993.5" y1="652" x2="993.5" y2="851" stroke="#8c96a0" stroke-width="1" stroke-dasharray="3,3"/><line x1="1025.5" y1="40" x2="1025.5" y2="648" stroke="#8c96a0" stroke-width="1" stroke-dasharray="3,3"/><line x1="1025.5" y1="652" x2="1025.5" y2="851" stroke="#8c96a0" stroke-width="1" stroke-dasharray="3,3"/><line x1="1057.5" y1="40" x2="1057.5" y2="648" stroke="#8c96a0" stroke-width="1" stroke-dasharray="3,3"/><line x1="1057.5" y1="652" x2="1057.5" y2="851" stroke="#8c96a0" stroke-width="1" stroke-dasharray="3,3"/><line x1="1089.5" y1="40" x2="1089.5" y2="648" stroke="#8c96a0" stroke-width="1" stroke-dasharray="3,3"/><line x1="1089.5" y1="652" x2="1089.5" y2="851" stroke="#8c96a0" stroke-width="1" stroke-dasharray="3,3"/><line x1="1121.5" y1="40" x2="1121.5" y2="648" stroke="#8c96a0" stroke-width="1" stroke-dasharray="3,3"/><line x1="1121.5" y1="652" x2="1121.5" y2="851" stroke="#8c96a0" stroke-width="1" stroke-dasharray="3,3"/><line x1="1153.5" y1="40" x2="1153.5" y2="648" stroke="#8c96a0" stroke-width="1" stroke-dasharray="3,3"/><line x1="1153.5" y1="652" x2="1153.5" y2="851" stroke="#8c96a0" stroke-width="1" stroke-dasharray="3,3"/><line x1="1185.5" y1="40" x2="1185.5" y2="648" stroke="#8c96a0" stroke-width="1" stroke-dasharray="3,3"/><line x1="1185.5" y1="652" x2="1185.5" y2="851" stroke="#8c96a0" stroke-width="1" stroke-dasharray="3,3"/><line x1="1217.5" y1="40" x2="1217.5" y2="648" stroke="#8c96a0" stroke-width="1" stroke-dasharray="3,3"/><line x1="1217.5" y1="652" x2="1217.5" y2="851" stroke="#8c96a0" stroke-width="1" stroke-dasharray="3,3"/><line x1="1249.5" y1="40" x2="1249.5" y2="648" stroke="#8c96a0" stroke-width="1" stroke-dasharray="3,3"/><line x1="1249.5" y1="652" x2="1249.5" y2="851" stroke="#8c96a0" stroke-width="1" stroke-dasharray="3,3"/><line x1="1281.5" y1="40" x2="1281.5" y2="648" stroke="#8c96a0" stroke-width="1" stroke-dasharray="3,3"/><line x1="1281.5" y1="652" x2="1281.5" y2="851" stroke="#8c96a0" stroke-width="1" stroke-dasharray="3,3"/><line x1="1313.5" y1="40" x2="1313.5" y2="648" stroke="#8c96a0" stroke-width="1" stroke-dasharray="3,3"/><line x1="1313.5" y1="652" x2="1313.5" y2="851" stroke="#8c96a0" stroke-width="1" stroke-dasharray="3,3"/><line x1="1345.5" y1="40" x2="1345.5" y2="648" stroke="#8c96a0" stroke-width="1" stroke-dasharray="3,3"/><line x1="1345.5" y1="652" x2="1345.5" y2="851" stroke="#8c96a0" stroke-width="1" stroke-dasharray="3,3"/><line x1="1377.5" y1="40" x2="1377.5" y2="648" stroke="#8c96a0" stroke-width="1" stroke-dasharray="3,3"/><line x1="1377.5" y1="652" x2="1377.5" y2="851" stroke="#8c96a0" stroke-width="1" stroke-dasharray="3,3"/><line x1="1409.5" y1="40" x2="1409.5" y2="648" stroke="#8c96a0" stroke-width="1" stroke-dasharray="3,3"/><line x1="1409.5" y1="652" x2="1409.5" y2="851" stroke="#8c96a0" stroke-width="1" stroke-dasharray="3,3"/><line x1="1441.5" y1="40" x2="1441.5" y2="648" stroke="#8c96a0" stroke-width="1" stroke-dasharray="3,3"/><line x1="1441.5" y1="652" x2="1441.5" y2="851" stroke="#8c96a0" stroke-width="1" stroke-dasharray="3,3"/><line x1="1473.5" y1="40" x2="1473.5" y2="648" stroke="#8c96a0" stroke-width="1" stroke-dasharray="3,3"/><line x1="1473.5" y1="652" x2="1473.5" y2="851" stroke="#8c96a0" stroke-width="1" stroke-dasharray="3,3"/><line x1="1505.5" y1="40" x2="1505.5" y2="648" stroke="#8c96a0" stroke-width="1" stroke-dasharray="3,3"/><line x1="1505.5" y1="652" x2="1505.5" y2="851" stroke="#8c96a0" stroke-width="1" stroke-dasharray="3,3"/><line x1="1537.5" y1="40" x2="1537.5" y2="648" stroke="#8c96a0" stroke-width="1" stroke-dasharray="3,3"/><line x1="1537.5" y1="652" x2="1537.5" y2="851" stroke="#8c96a0" stroke-width="1" stroke-dasharray="3,3"/><line x1="1569.5" y1="40" x2="1569.5" y2="648" stroke="#8c96a0" stroke-width="1" stroke-dasharray="3,3"/><line x1="1569.5" y1="652" x2="1569.5" y2="851" stroke="#8c96a0" stroke-width="1" stroke-dasharray="3,3"/><line x1="1601.5" y1="40" x2="1601.5" y2="648" stroke="#8c96a0" stroke-width="1" stroke-dasharray="3,3"/><line x1="1601.5" y1="652" x2="1601.5" y2="851" stroke="#8c96a0" stroke-width="1" stroke-dasharray="3,3"/><line x1="1633.5" y1="40" x2="1633.5" y2="648" stroke="#8c96a0" stroke-width="1" stroke-dasharray="3,3"/><line x1="1633.5" y1="652" x2="1633.5" y2="851" stroke="#8c96a0" stroke-width="1" stroke-dasharray="3,3"/><line x1="1665.5" y1="40" x2="1665.5" y2="648" stroke="#8c96a0" stroke-width="1" stroke-dasharray="3,3"/><line x1="1665.5" y1="652" x2="1665.5" y2="851" stroke="#8c96a0" stroke-width="1" stroke-dasharray="3,3"/><line x1="1697.5" y1="40" x2="1697.5" y2="648" stroke="#8c96a0" stroke-width="1" stroke-dasharray="3,3"/><line x1="1697.5" y1="652" x2="1697.5" y2="851" stroke="#8c96a0" stroke-width="1" stroke-dasharray="3,3"/><line x1="1729.5" y1="40" x2="1729.5" y2="648" stroke="#8c96a0" stroke-width="1" stroke-dasharray="3,3"/><line x1="1729.5" y1="652" x2="1729.5" y2="851" stroke="#8c96a0" stroke-width="1" stroke-dasharray="3,3"/><line x1="1761.5" y1="40" x2="1761.5" y2="648" stroke="#8c96a0" stroke-width="1" stroke-dasharray="3,3"/><line x1="1761.5" y1="652" x2="1761.5" y2="851" stroke="#8c96a0" stroke-width="1" stroke-dasharray="3,3"/><line x1="961" y1="41.3" x2="1776" y2="41.3" stroke="#8c96a0" stroke-width="1" stroke-dasharray="3,3"/><line x1="961" y1="84.5" x2="1776" y2="84.5" stroke="#8c96a0" stroke-width="1" stroke-dasharray="3,3"/><line x1="961" y1="127.7" x2="1776" y2="127.7" stroke="#8c96a0" stroke-width="1" stroke-dasharray="3,3"/><line x1="961" y1="170.9" x2="1776" y2="170.9" stroke="#8c96a0" stroke-width="1" stroke-dasharray="3,3"/><line x1="961" y1="214.1" x2="1776" y2="214.1" stroke="#8c96a0" stroke-width="1" stroke-dasharray="3,3"/><line x1="961" y1="257.3" x2="1776" y2="257.3" stroke="#8c96a0" stroke-width="1" stroke-dasharray="3,3"/><line x1="961" y1="300.5" x2="1776" y2="300.5" stroke="#8c96a0" stroke-width="1" stroke-dasharray="3,3"/><line x1="961" y1="343.7" x2="1776" y2="343.7" stroke="#8c96a0" stroke-width="1" stroke-dasharray="3,3"/><line x1="961" y1="386.9" x2="1776" y2="386.9" stroke="#8c96a0" stroke-width="1" stroke-dasharray="3,3"/><line x1="961" y1="430.1" x2="1776" y2="430.1" stroke="#8c96a0" stroke-width="1" stroke-dasharray="3,3"/><line x1="961" y1="473.3" x2="1776" y2="473.3" stroke="#8c96a0" stroke-width="1" stroke-dasharray="3,3"/><line x1="961" y1="516.5" x2="1776" y2="516.5" stroke="#8c96a0" stroke-width="1" stroke-dasharray="3,3"/><line x1="961" y1="559.7" x2="1776" y2="559.7" stroke="#8c96a0" stroke-width="1" stroke-dasharray="3,3"/><line x1="961" y1="602.9" x2="1776" y2="602.9" stroke="#8c96a0" stroke-width="1" stroke-dasharray="3,3"/><line x1="961" y1="646.1" x2="1776" y2="646.1" stroke="#8c96a0" stroke-width="1" stroke-dasharray="3,3"/><line x1="961" y1="701.2" x2="1776" y2="701.2" stroke="#8c96a0" stroke-width="1" stroke-dasharray="3,3"/><line x1="961" y1="751.5" x2="1776" y2="751.5" stroke="#8c96a0" stroke-width="1" stroke-dasharray="3,3"/><line x1="961" y1="801.7" x2="1776" y2="801.7" stroke="#8c96a0" stroke-width="1" stroke-dasharray="3,3"/><path d="M1776 39.5 L960.5 39.5 L960.5 851.5 L1776 851.5" fill="none" stroke="#fff" stroke-width="1"/><line x1="961" y1="648.8" x2="1776" y2="648.8" stroke="#fff" stroke-width="1"/><line x1="961" y1="651" x2="1776" y2="651" stroke="#fff" stroke-width="1"/><rect x="961" y="127.5" width="2.5" height="9" fill="none" stroke="#3ce03c" stroke-width="1"/><rect x="967.5" y="153.5" width="4" height="26" fill="#fff" stroke="#3ce03c" stroke-width="1.2"/><rect x="975.5" y="197.5" width="4" height="16.5" fill="#fff" stroke="#3ce03c" stroke-width="1.2"/><rect x="983.5" y="188.5" width="4" height="34.5" fill="#000" stroke="#3ce03c" stroke-width="1"/><rect x="991.5" y="171.5" width="4" height="51.5" fill="#fff" stroke="#3ce03c" stroke-width="1.2"/><line x1="975" y1="214.5" x2="983" y2="214.5" stroke="#3ce03c" stroke-width="1"/><line x1="999" y1="231.5" x2="1004" y2="231.5" stroke="#3ce03c" stroke-width="1"/><polyline points="961.0,189.7 973.3,184.4 987.5,180.9 996.0,181.2 1004.5,185.2 1015.8,195.0 1025.7,206.4 1036.0,215.0" fill="none" stroke="#e8e85a" stroke-width="1" stroke-linejoin="round" stroke-linecap="round" /><path d="M1665 40 L1675 40 L1670 45 Z" fill="#8a97a6"/><polyline points="960.8,772.8 977.6,721.5 992.6,757.8 1009.7,702.7 1017.7,725.2 1025.7,701.4 1034.0,722.7 1045.3,700.2 1055.3,715.2 1065.3,685.1 1075.3,705.2 1085.4,690.1 1097.9,740.3 1111.7,776.6 1115.4,779.1 1120.4,770.3 1130.5,750.3 1140.5,765.3 1148.0,776.6 1163.0,800.4 1185.6,820.5 1193.1,784.1 1233.2,826.7 1242.0,789.1 1289.6,833.5 1297.1,809.9 1346.0,841.8 1362.3,776.6 1371.1,740.3" fill="none" stroke="#e81818" stroke-width="1" stroke-linejoin="round" stroke-linecap="round" /><polyline points="1372.1,740.3 1384.6,776.6 1393.4,789.9 1397.7,776.6 1404.7,760.3 1412.2,776.6 1417.2,784.1 1420.2,776.6 1432.3,745.3 1457.3,715.2 1487.4,776.6 1489.4,778.3 1492.4,765.3 1532.5,715.2 1582.6,745.3 1620.2,776.6 1640.8,805.4 1648.3,776.6 1652.8,760.3" fill="none" stroke="#e81818" stroke-width="1" stroke-linejoin="round" stroke-linecap="round" /><polyline points="960.8,704.7 985.1,761.6 993.1,761.6 1025.2,807.4 1033.2,789.9 1065.3,823.5 1081.6,808.4 1089.1,794.1 1105.4,811.7 1113.4,790.4 1129.2,809.9 1140.5,776.6 1145.5,765.3 1153.0,770.3 1156.8,776.6 1161.0,785.4 1163.5,776.6 1170.6,760.3" fill="none" stroke="#96e650" stroke-width="1" stroke-linejoin="round" stroke-linecap="round" /><polyline points="1457.3,760.3 1466.1,776.6 1481.6,797.4 1486.6,776.6 1492.4,765.3 1496.2,776.6 1505.7,789.9 1510.4,776.6 1515.0,770.3 1518.7,776.6 1545.0,810.4 1553.8,776.6 1562.6,760.3 1581.4,776.6 1585.1,780.9 1587.1,776.6 1597.7,765.3 1607.7,776.6 1609.4,778.3 1611.4,775.3" fill="none" stroke="#96e650" stroke-width="1" stroke-linejoin="round" stroke-linecap="round" /><polyline points="960.8,770.3 993.1,802.4 1001.4,802.4 1017.7,790.4 1025.2,780.4 1035.2,776.6 1070.3,760.3 1120.4,765.3 1138.0,776.6 1145.5,785.4 1161.0,801.7 1169.3,796.6 1183.1,776.6 1220.7,760.3 1295.9,765.3" fill="none" stroke="#c8c8c8" stroke-width="1" stroke-linejoin="round" stroke-linecap="round" /><polyline points="1382.1,765.3 1432.3,776.6 1441.0,776.6 1447.3,784.1 1464.8,794.1 1478.6,795.9 1496.2,805.4 1504.9,800.4 1512.5,803.4 1522.5,803.4 1532.5,796.6 1545.0,781.6 1551.3,782.9 1561.3,795.4 1570.1,797.4 1600.2,810.4 1616.5,816.2 1627.7,811.7 1641.5,796.6 1648.3,797.9 1657.1,805.9" fill="none" stroke="#c8c8c8" stroke-width="1" stroke-linejoin="round" stroke-linecap="round" /><line x1="961.5" y1="851.5" x2="961.5" y2="855" stroke="#fff" stroke-width="1"/><line x1="1025.5" y1="851.5" x2="1025.5" y2="855" stroke="#fff" stroke-width="1"/><line x1="1089.5" y1="851.5" x2="1089.5" y2="855" stroke="#fff" stroke-width="1"/><line x1="1153.5" y1="851.5" x2="1153.5" y2="855" stroke="#fff" stroke-width="1"/><line x1="1217.5" y1="851.5" x2="1217.5" y2="855" stroke="#fff" stroke-width="1"/><line x1="1281.5" y1="851.5" x2="1281.5" y2="855" stroke="#fff" stroke-width="1"/><line x1="1345.5" y1="851.5" x2="1345.5" y2="855" stroke="#fff" stroke-width="1"/><line x1="1409.5" y1="851.5" x2="1409.5" y2="855" stroke="#fff" stroke-width="1"/><line x1="1473.5" y1="851.5" x2="1473.5" y2="855" stroke="#fff" stroke-width="1"/><line x1="1537.5" y1="851.5" x2="1537.5" y2="855" stroke="#fff" stroke-width="1"/><line x1="1601.5" y1="851.5" x2="1601.5" y2="855" stroke="#fff" stroke-width="1"/></svg><div class="t" style="left:965.3px;top:42.64px;font-size:10px;color:#fff;letter-spacing:-0.420px;">GBPJPY_6S,M1  165.266 165.266 165.265 165.265</div><div class="t" style="left:965.5px;top:654.53px;font-size:10px;color:#d8d8d8;letter-spacing:-0.385px;">ADX(14) 18.7840 25.0</div><div class="t" style="left:960.5px;top:855.53px;font-size:10px;color:#fff;letter-spacing:-0.490px;">9 Sep 2022</div><div class="t" style="left:1024.5px;top:855.53px;font-size:10px;color:#fff;letter-spacing:-0.374px;">9 Sep 17:23</div><div class="t" style="left:1088.5px;top:855.53px;font-size:10px;color:#fff;letter-spacing:-0.374px;">9 Sep 17:24</div><div class="t" style="left:1152.5px;top:855.53px;font-size:10px;color:#fff;letter-spacing:-0.374px;">9 Sep 17:25</div><div class="t" style="left:1216.5px;top:855.53px;font-size:10px;color:#fff;letter-spacing:-0.374px;">9 Sep 17:26</div><div class="t" style="left:1280.5px;top:855.53px;font-size:10px;color:#fff;letter-spacing:-0.374px;">9 Sep 17:27</div><div class="t" style="left:1344.5px;top:855.53px;font-size:10px;color:#fff;letter-spacing:-0.374px;">9 Sep 17:28</div><div class="t" style="left:1408.5px;top:855.53px;font-size:10px;color:#fff;letter-spacing:-0.374px;">9 Sep 17:29</div><div class="t" style="left:1472.5px;top:855.53px;font-size:10px;color:#fff;letter-spacing:-0.374px;">9 Sep 17:30</div><div class="t" style="left:1536.5px;top:855.53px;font-size:10px;color:#fff;letter-spacing:-0.374px;">9 Sep 17:31</div><div class="t" style="left:1600.5px;top:855.53px;font-size:10px;color:#fff;letter-spacing:-0.374px;">9 Sep 17:32</div><div style="left:847px;top:234px;width:188px;height:424px;background:#f0f0f0;overflow:hidden"><div style="left:0;top:0;width:188px;height:30px;background:#fff"></div><svg style="left:8px;top:7px" width="17" height="15" viewBox="0 0 17 15">
<rect x="0.5" y="0.5" width="13" height="10" fill="#fff" stroke="#3c6e9a"/><rect x="0.5" y="0.5" width="13" height="1.6" fill="#3c6e9a"/>
<path d="M3 4 L3 8 M1.8 5.2 L3 4 L4.2 5.2 M1.8 6.8 L3 8 L4.2 6.8" stroke="#3c6e9a" fill="none" stroke-width=".9"/>
<rect x="6.5" y="4.5" width="9.5" height="9.5" rx="1.5" fill="#f2cf4a" stroke="#d9ae2c"/>
<path d="M12.6 6.6 C11.4 6.2 11.2 7 11 8.6 L10.6 11 C10.4 12.3 9.8 12.4 9.2 12.1 M9.8 8.8 L12.4 8.8" stroke="#6b4a08" stroke-width="1.1" fill="none"/></svg><svg style="left:0;top:0" width="188" height="30"><text class="cjk" x="29" y="19.6" font-size="12.2" fill="#9a9a9a">技术指标</text></svg><div class="t" style="left:81.0px;top:8.30px;font-size:13px;color:#9a9a9a;letter-spacing:-0.317px;">GBPJPY_3S,M1 (offline)</div><div style="left:8px;top:38px;width:200px;height:376px;background:#fff;border:1px solid #828790"></div><svg style="left:0;top:0" width="188" height="424"><line x1="22.5" y1="54.39999999999998" x2="22.5" y2="351.4" stroke="#8a8a8a" stroke-width="1" stroke-dasharray="1,1"/><text class="cjk" x="57.3" y="53.8" font-size="12.2" fill="#000">主图表</text><line x1="27" y1="49.9" x2="34" y2="49.9" stroke="#8a8a8a" stroke-width="1" stroke-dasharray="1,1"/><line x1="43.5" y1="57.4" x2="43.5" y2="194.4" stroke="#8a8a8a" stroke-width="1" stroke-dasharray="1,1"/><line x1="44" y1="67.9" x2="55" y2="67.9" stroke="#8a8a8a" stroke-width="1" stroke-dasharray="1,1"/><line x1="44" y1="85.9" x2="55" y2="85.9" stroke="#8a8a8a" stroke-width="1" stroke-dasharray="1,1"/><line x1="44" y1="103.9" x2="55" y2="103.9" stroke="#8a8a8a" stroke-width="1" stroke-dasharray="1,1"/><line x1="44" y1="121.9" x2="55" y2="121.9" stroke="#8a8a8a" stroke-width="1" stroke-dasharray="1,1"/><line x1="44" y1="139.9" x2="55" y2="139.9" stroke="#8a8a8a" stroke-width="1" stroke-dasharray="1,1"/><line x1="44" y1="157.9" x2="55" y2="157.9" stroke="#8a8a8a" stroke-width="1" stroke-dasharray="1,1"/><line x1="44" y1="175.9" x2="55" y2="175.9" stroke="#8a8a8a" stroke-width="1" stroke-dasharray="1,1"/><line x1="44" y1="193.9" x2="55" y2="193.9" stroke="#8a8a8a" stroke-width="1" stroke-dasharray="1,1"/><text class="cjk" x="57.3" y="215.8" font-size="12.2" fill="#000">技术指标窗口</text><line x1="27" y1="211.9" x2="34" y2="211.9" stroke="#8a8a8a" stroke-width="1" stroke-dasharray="1,1"/><line x1="43.5" y1="219.4" x2="43.5" y2="230.4" stroke="#8a8a8a" stroke-width="1" stroke-dasharray="1,1"/><line x1="44" y1="229.9" x2="55" y2="229.9" stroke="#8a8a8a" stroke-width="1" stroke-dasharray="1,1"/><text class="cjk" x="57.3" y="251.8" font-size="12.2" fill="#000">技术指标窗口</text><line x1="27" y1="247.9" x2="34" y2="247.9" stroke="#8a8a8a" stroke-width="1" stroke-dasharray="1,1"/><line x1="43.5" y1="255.4" x2="43.5" y2="266.4" stroke="#8a8a8a" stroke-width="1" stroke-dasharray="1,1"/><line x1="44" y1="265.9" x2="55" y2="265.9" stroke="#8a8a8a" stroke-width="1" stroke-dasharray="1,1"/><text class="cjk" x="57.3" y="287.8" font-size="12.2" fill="#000">技术指标窗口</text><line x1="27" y1="283.9" x2="34" y2="283.9" stroke="#8a8a8a" stroke-width="1" stroke-dasharray="1,1"/><line x1="43.5" y1="291.4" x2="43.5" y2="302.4" stroke="#8a8a8a" stroke-width="1" stroke-dasharray="1,1"/><line x1="44" y1="301.9" x2="55" y2="301.9" stroke="#8a8a8a" stroke-width="1" stroke-dasharray="1,1"/><text class="cjk" x="57.3" y="323.8" font-size="12.2" fill="#000">技术指标窗口</text><line x1="27" y1="319.9" x2="34" y2="319.9" stroke="#8a8a8a" stroke-width="1" stroke-dasharray="1,1"/><line x1="43.5" y1="327.4" x2="43.5" y2="338.4" stroke="#8a8a8a" stroke-width="1" stroke-dasharray="1,1"/><line x1="44" y1="337.9" x2="55" y2="337.9" stroke="#8a8a8a" stroke-width="1" stroke-dasharray="1,1"/><text class="cjk" x="57.3" y="359.8" font-size="12.2" fill="#000">技术指标窗口</text><line x1="27" y1="355.9" x2="34" y2="355.9" stroke="#8a8a8a" stroke-width="1" stroke-dasharray="1,1"/><line x1="43.5" y1="363.4" x2="43.5" y2="374.4" stroke="#8a8a8a" stroke-width="1" stroke-dasharray="1,1"/><line x1="44" y1="373.9" x2="55" y2="373.9" stroke="#8a8a8a" stroke-width="1" stroke-dasharray="1,1"/></svg><svg style="left:18px;top:45px" width="9" height="9"><rect x=".5" y=".5" width="8" height="8" rx="1.2" fill="#f6f6f6" stroke="#8f8f8f"/><rect x="2" y="4" width="5" height="1.2" fill="#27388c"/></svg><svg style="left:35px;top:42px" width="17" height="15" viewBox="0 0 17 15">
<rect x="0.75" y="0.75" width="15" height="13" rx="1" fill="#fff" stroke="#2f5fd0" stroke-width="1.4"/>
<rect x="0.5" y="0.5" width="15.5" height="3.6" rx="1" fill="#1c4fd0"/>
<rect x="9" y="1.6" width="1.3" height="1.3" fill="#fff"/><rect x="11.3" y="1.6" width="1.3" height="1.3" fill="#fff"/><rect x="13.6" y="1.6" width="1.3" height="1.3" fill="#fff"/>
<path d="M3.4 11.4 C5 4.6 6.8 4.6 8.4 9 C9.8 12.6 11.6 11 13.2 5.4" stroke="#8f9fe0" stroke-width="1.5" fill="none"/></svg><svg style="left:57px;top:60px" width="16" height="16" viewBox="0 0 16 16">
<rect x="0.5" y="0.5" width="13" height="13" rx="2" fill="#f4d65c" stroke="#d2a626"/>
<rect x="1.5" y="1.5" width="11" height="5" rx="1.5" fill="#f9e58c" opacity=".7"/>
<path d="M9.6 3 C8.2 2.4 7.8 3.4 7.6 5 L7 9 C6.8 10.6 6 10.8 5.2 10.4 M5.8 5.8 L9.4 5.8" stroke="#5c3d05" stroke-width="1.2" fill="none"/>
<path d="M11.8 8.8 L14.8 11.8 L11.8 14.8 L8.8 11.8 Z" fill="#f4d65c" stroke="#b98a14" stroke-width="1"/></svg><div class="t" style="left:77.5px;top:61.99px;font-size:11px;color:#000;letter-spacing:-0.137px;">Projectreaper_Regress</div><svg style="left:57px;top:78px" width="16" height="16" viewBox="0 0 16 16">
<rect x="0.5" y="0.5" width="13" height="13" rx="2" fill="#f4d65c" stroke="#d2a626"/>
<rect x="1.5" y="1.5" width="11" height="5" rx="1.5" fill="#f9e58c" opacity=".7"/>
<path d="M9.6 3 C8.2 2.4 7.8 3.4 7.6 5 L7 9 C6.8 10.6 6 10.8 5.2 10.4 M5.8 5.8 L9.4 5.8" stroke="#5c3d05" stroke-width="1.2" fill="none"/>
<path d="M11.8 8.8 L14.8 11.8 L11.8 14.8 L8.8 11.8 Z" fill="#f4d65c" stroke="#b98a14" stroke-width="1"/></svg><div class="t" style="left:77.5px;top:79.99px;font-size:11px;color:#000;letter-spacing:-0.251px;">guppy ma mtf BT</div><svg style="left:57px;top:96px" width="16" height="16" viewBox="0 0 16 16">
<rect x="0.5" y="0.5" width="13" height="13" rx="2" fill="#f4d65c" stroke="#d2a626"/>
<rect x="1.5" y="1.5" width="11" height="5" rx="1.5" fill="#f9e58c" opacity=".7"/>
<path d="M9.6 3 C8.2 2.4 7.8 3.4 7.6 5 L7 9 C6.8 10.6 6 10.8 5.2 10.4 M5.8 5.8 L9.4 5.8" stroke="#5c3d05" stroke-width="1.2" fill="none"/>
<path d="M11.8 8.8 L14.8 11.8 L11.8 14.8 L8.8 11.8 Z" fill="#f4d65c" stroke="#b98a14" stroke-width="1"/></svg><div class="t" style="left:77.5px;top:97.99px;font-size:11px;color:#000;letter-spacing:-0.124px;">fxnav_Japan_Time</div><svg style="left:57px;top:114px" width="16" height="16" viewBox="0 0 16 16">
<rect x="0.5" y="0.5" width="13" height="13" rx="2" fill="#f4d65c" stroke="#d2a626"/>
<rect x="1.5" y="1.5" width="11" height="5" rx="1.5" fill="#f9e58c" opacity=".7"/>
<path d="M9.6 3 C8.2 2.4 7.8 3.4 7.6 5 L7 9 C6.8 10.6 6 10.8 5.2 10.4 M5.8 5.8 L9.4 5.8" stroke="#5c3d05" stroke-width="1.2" fill="none"/>
<path d="M11.8 8.8 L14.8 11.8 L11.8 14.8 L8.8 11.8 Z" fill="#f4d65c" stroke="#b98a14" stroke-width="1"/></svg><div class="t" style="left:77.5px;top:115.99px;font-size:11px;color:#000;letter-spacing:-0.451px;">BBdata</div><svg style="left:57px;top:132px" width="16" height="16" viewBox="0 0 16 16">
<rect x="0.5" y="0.5" width="13" height="13" rx="2" fill="#f4d65c" stroke="#d2a626"/>
<rect x="1.5" y="1.5" width="11" height="5" rx="1.5" fill="#f9e58c" opacity=".7"/>
<path d="M9.6 3 C8.2 2.4 7.8 3.4 7.6 5 L7 9 C6.8 10.6 6 10.8 5.2 10.4 M5.8 5.8 L9.4 5.8" stroke="#5c3d05" stroke-width="1.2" fill="none"/>
<path d="M11.8 8.8 L14.8 11.8 L11.8 14.8 L8.8 11.8 Z" fill="#f4d65c" stroke="#b98a14" stroke-width="1"/></svg><div class="t" style="left:77.5px;top:133.99px;font-size:11px;color:#000;letter-spacing:-0.292px;">Supply-Demand-Zones</div><svg style="left:57px;top:150px" width="16" height="16" viewBox="0 0 16 16">
<rect x="0.5" y="0.5" width="13" height="13" rx="2" fill="#f4d65c" stroke="#d2a626"/>
<rect x="1.5" y="1.5" width="11" height="5" rx="1.5" fill="#f9e58c" opacity=".7"/>
<path d="M9.6 3 C8.2 2.4 7.8 3.4 7.6 5 L7 9 C6.8 10.6 6 10.8 5.2 10.4 M5.8 5.8 L9.4 5.8" stroke="#5c3d05" stroke-width="1.2" fill="none"/>
<path d="M11.8 8.8 L14.8 11.8 L11.8 14.8 L8.8 11.8 Z" fill="#f4d65c" stroke="#b98a14" stroke-width="1"/></svg><div class="t" style="left:77.5px;top:151.99px;font-size:11px;color:#000;letter-spacing:-0.012px;">fxnav_ma</div><svg style="left:57px;top:168px" width="16" height="16" viewBox="0 0 16 16">
<rect x="0.5" y="0.5" width="13" height="13" rx="2" fill="#f4d65c" stroke="#d2a626"/>
<rect x="1.5" y="1.5" width="11" height="5" rx="1.5" fill="#f9e58c" opacity=".7"/>
<path d="M9.6 3 C8.2 2.4 7.8 3.4 7.6 5 L7 9 C6.8 10.6 6 10.8 5.2 10.4 M5.8 5.8 L9.4 5.8" stroke="#5c3d05" stroke-width="1.2" fill="none"/>
<path d="M11.8 8.8 L14.8 11.8 L11.8 14.8 L8.8 11.8 Z" fill="#f4d65c" stroke="#b98a14" stroke-width="1"/></svg><div class="t" style="left:77.5px;top:169.99px;font-size:11px;color:#000;letter-spacing:-0.662px;">XU v38-BORDERS</div><svg style="left:57px;top:186px" width="16" height="16" viewBox="0 0 16 16">
<rect x="0.5" y="0.5" width="13" height="13" rx="2" fill="#f4d65c" stroke="#d2a626"/>
<rect x="1.5" y="1.5" width="11" height="5" rx="1.5" fill="#f9e58c" opacity=".7"/>
<path d="M9.6 3 C8.2 2.4 7.8 3.4 7.6 5 L7 9 C6.8 10.6 6 10.8 5.2 10.4 M5.8 5.8 L9.4 5.8" stroke="#5c3d05" stroke-width="1.2" fill="none"/>
<path d="M11.8 8.8 L14.8 11.8 L11.8 14.8 L8.8 11.8 Z" fill="#f4d65c" stroke="#b98a14" stroke-width="1"/></svg><div class="t" style="left:77.5px;top:187.99px;font-size:11px;color:#000;letter-spacing:-0.353px;">XU-MA v2 mod</div><svg style="left:18px;top:207px" width="9" height="9"><rect x=".5" y=".5" width="8" height="8" rx="1.2" fill="#f6f6f6" stroke="#8f8f8f"/><rect x="2" y="4" width="5" height="1.2" fill="#27388c"/></svg><svg style="left:35px;top:204px" width="17" height="15" viewBox="0 0 17 15">
<rect x="0.75" y="0.75" width="15" height="13" rx="1" fill="#fff" stroke="#2f5fd0" stroke-width="1.4"/>
<rect x="0.5" y="0.5" width="15.5" height="3.6" rx="1" fill="#1c4fd0"/>
<rect x="9" y="1.6" width="1.3" height="1.3" fill="#fff"/><rect x="11.3" y="1.6" width="1.3" height="1.3" fill="#fff"/><rect x="13.6" y="1.6" width="1.3" height="1.3" fill="#fff"/>
<path d="M3.4 11.4 C5 4.6 6.8 4.6 8.4 9 C9.8 12.6 11.6 11 13.2 5.4" stroke="#8f9fe0" stroke-width="1.5" fill="none"/></svg><div class="t" style="left:130.5px;top:205.99px;font-size:11px;color:#000;letter-spacing:0.000px;"> 1</div><svg style="left:57px;top:222px" width="16" height="16" viewBox="0 0 16 16">
<rect x="0.5" y="0.5" width="13" height="13" rx="2" fill="#f4d65c" stroke="#d2a626"/>
<rect x="1.5" y="1.5" width="11" height="5" rx="1.5" fill="#f9e58c" opacity=".7"/>
<path d="M9.6 3 C8.2 2.4 7.8 3.4 7.6 5 L7 9 C6.8 10.6 6 10.8 5.2 10.4 M5.8 5.8 L9.4 5.8" stroke="#5c3d05" stroke-width="1.2" fill="none"/>
<path d="M11.8 8.8 L14.8 11.8 L11.8 14.8 L8.8 11.8 Z" fill="#f4d65c" stroke="#b98a14" stroke-width="1"/></svg><div class="t" style="left:77.5px;top:223.99px;font-size:11px;color:#000;letter-spacing:-0.117px;">! TDI Red Green avgs</div><svg style="left:18px;top:243px" width="9" height="9"><rect x=".5" y=".5" width="8" height="8" rx="1.2" fill="#f6f6f6" stroke="#8f8f8f"/><rect x="2" y="4" width="5" height="1.2" fill="#27388c"/></svg><svg style="left:35px;top:240px" width="17" height="15" viewBox="0 0 17 15">
<rect x="0.75" y="0.75" width="15" height="13" rx="1" fill="#fff" stroke="#2f5fd0" stroke-width="1.4"/>
<rect x="0.5" y="0.5" width="15.5" height="3.6" rx="1" fill="#1c4fd0"/>
<rect x="9" y="1.6" width="1.3" height="1.3" fill="#fff"/><rect x="11.3" y="1.6" width="1.3" height="1.3" fill="#fff"/><rect x="13.6" y="1.6" width="1.3" height="1.3" fill="#fff"/>
<path d="M3.4 11.4 C5 4.6 6.8 4.6 8.4 9 C9.8 12.6 11.6 11 13.2 5.4" stroke="#8f9fe0" stroke-width="1.5" fill="none"/></svg><div class="t" style="left:130.5px;top:241.99px;font-size:11px;color:#000;letter-spacing:0.000px;"> 2</div><svg style="left:57px;top:258px" width="16" height="16" viewBox="0 0 16 16">
<rect x="0.5" y="0.5" width="13" height="13" rx="2" fill="#f4d65c" stroke="#d2a626"/>
<rect x="1.5" y="1.5" width="11" height="5" rx="1.5" fill="#f9e58c" opacity=".7"/>
<path d="M9.6 3 C8.2 2.4 7.8 3.4 7.6 5 L7 9 C6.8 10.6 6 10.8 5.2 10.4 M5.8 5.8 L9.4 5.8" stroke="#5c3d05" stroke-width="1.2" fill="none"/>
<path d="M11.8 8.8 L14.8 11.8 L11.8 14.8 L8.8 11.8 Z" fill="#f4d65c" stroke="#b98a14" stroke-width="1"/></svg><div class="t" style="left:77.5px;top:259.99px;font-size:11px;color:#000;letter-spacing:-0.142px;">TDI Alerts v3.0 Repaire</div><svg style="left:18px;top:279px" width="9" height="9"><rect x=".5" y=".5" width="8" height="8" rx="1.2" fill="#f6f6f6" stroke="#8f8f8f"/><rect x="2" y="4" width="5" height="1.2" fill="#27388c"/></svg><svg style="left:35px;top:276px" width="17" height="15" viewBox="0 0 17 15">
<rect x="0.75" y="0.75" width="15" height="13" rx="1" fill="#fff" stroke="#2f5fd0" stroke-width="1.4"/>
<rect x="0.5" y="0.5" width="15.5" height="3.6" rx="1" fill="#1c4fd0"/>
<rect x="9" y="1.6" width="1.3" height="1.3" fill="#fff"/><rect x="11.3" y="1.6" width="1.3" height="1.3" fill="#fff"/><rect x="13.6" y="1.6" width="1.3" height="1.3" fill="#fff"/>
<path d="M3.4 11.4 C5 4.6 6.8 4.6 8.4 9 C9.8 12.6 11.6 11 13.2 5.4" stroke="#8f9fe0" stroke-width="1.5" fill="none"/></svg><div class="t" style="left:130.5px;top:277.99px;font-size:11px;color:#000;letter-spacing:0.000px;"> 3</div><svg style="left:57px;top:294px" width="16" height="16" viewBox="0 0 16 16">
<rect x="0.5" y="0.5" width="13" height="13" rx="2" fill="#f4d65c" stroke="#d2a626"/>
<rect x="1.5" y="1.5" width="11" height="5" rx="1.5" fill="#f9e58c" opacity=".7"/>
<path d="M9.6 3 C8.2 2.4 7.8 3.4 7.6 5 L7 9 C6.8 10.6 6 10.8 5.2 10.4 M5.8 5.8 L9.4 5.8" stroke="#5c3d05" stroke-width="1.2" fill="none"/>
<path d="M11.8 8.8 L14.8 11.8 L11.8 14.8 L8.8 11.8 Z" fill="#f4d65c" stroke="#b98a14" stroke-width="1"/></svg><div class="t" style="left:77.5px;top:295.99px;font-size:11px;color:#000;letter-spacing:-0.242px;">! Super Passband Filter</div><svg style="left:18px;top:315px" width="9" height="9"><rect x=".5" y=".5" width="8" height="8" rx="1.2" fill="#f6f6f6" stroke="#8f8f8f"/><rect x="2" y="4" width="5" height="1.2" fill="#27388c"/></svg><svg style="left:35px;top:312px" width="17" height="15" viewBox="0 0 17 15">
<rect x="0.75" y="0.75" width="15" height="13" rx="1" fill="#fff" stroke="#2f5fd0" stroke-width="1.4"/>
<rect x="0.5" y="0.5" width="15.5" height="3.6" rx="1" fill="#1c4fd0"/>
<rect x="9" y="1.6" width="1.3" height="1.3" fill="#fff"/><rect x="11.3" y="1.6" width="1.3" height="1.3" fill="#fff"/><rect x="13.6" y="1.6" width="1.3" height="1.3" fill="#fff"/>
<path d="M3.4 11.4 C5 4.6 6.8 4.6 8.4 9 C9.8 12.6 11.6 11 13.2 5.4" stroke="#8f9fe0" stroke-width="1.5" fill="none"/></svg><div class="t" style="left:130.5px;top:313.99px;font-size:11px;color:#000;letter-spacing:0.000px;"> 4</div><svg style="left:57px;top:330px" width="16" height="16" viewBox="0 0 16 16">
<rect x="0.5" y="0.5" width="13" height="13" rx="2" fill="#f4d65c" stroke="#d2a626"/>
<rect x="1.5" y="1.5" width="11" height="5" rx="1.5" fill="#f9e58c" opacity=".7"/>
<path d="M9.6 3 C8.2 2.4 7.8 3.4 7.6 5 L7 9 C6.8 10.6 6 10.8 5.2 10.4 M5.8 5.8 L9.4 5.8" stroke="#5c3d05" stroke-width="1.2" fill="none"/>
<path d="M11.8 8.8 L14.8 11.8 L11.8 14.8 L8.8 11.8 Z" fill="#f4d65c" stroke="#b98a14" stroke-width="1"/></svg><div class="t" style="left:77.5px;top:331.99px;font-size:11px;color:#000;letter-spacing:-0.493px;">JPN_Time_SubZero</div><svg style="left:18px;top:351px" width="9" height="9"><rect x=".5" y=".5" width="8" height="8" rx="1.2" fill="#f6f6f6" stroke="#8f8f8f"/><rect x="2" y="4" width="5" height="1.2" fill="#27388c"/></svg><svg style="left:35px;top:348px" width="17" height="15" viewBox="0 0 17 15">
<rect x="0.75" y="0.75" width="15" height="13" rx="1" fill="#fff" stroke="#2f5fd0" stroke-width="1.4"/>
<rect x="0.5" y="0.5" width="15.5" height="3.6" rx="1" fill="#1c4fd0"/>
<rect x="9" y="1.6" width="1.3" height="1.3" fill="#fff"/><rect x="11.3" y="1.6" width="1.3" height="1.3" fill="#fff"/><rect x="13.6" y="1.6" width="1.3" height="1.3" fill="#fff"/>
<path d="M3.4 11.4 C5 4.6 6.8 4.6 8.4 9 C9.8 12.6 11.6 11 13.2 5.4" stroke="#8f9fe0" stroke-width="1.5" fill="none"/></svg><div class="t" style="left:130.5px;top:349.99px;font-size:11px;color:#000;letter-spacing:0.000px;"> 5</div><div style="left:76px;top:364.4px;width:74px;height:17px;background:#e6e6e6"></div><svg style="left:57px;top:366px" width="16" height="16" viewBox="0 0 16 16">
<rect x="0.5" y="0.5" width="13" height="13" rx="2" fill="#f4d65c" stroke="#d2a626"/>
<rect x="1.5" y="1.5" width="11" height="5" rx="1.5" fill="#f9e58c" opacity=".7"/>
<path d="M9.6 3 C8.2 2.4 7.8 3.4 7.6 5 L7 9 C6.8 10.6 6 10.8 5.2 10.4 M5.8 5.8 L9.4 5.8" stroke="#5c3d05" stroke-width="1.2" fill="none"/>
<path d="M11.8 8.8 L14.8 11.8 L11.8 14.8 L8.8 11.8 Z" fill="#f4d65c" stroke="#b98a14" stroke-width="1"/></svg><div class="t" style="left:77.5px;top:367.99px;font-size:11px;color:#000;letter-spacing:-0.271px;">xu ma histo BT</div><div style="left:9px;top:396px;width:198px;height:17px;background:#f0f0f0"></div><div style="left:27px;top:396px;width:180px;height:17px;background:#cdcdcd"></div><svg style="left:14px;top:400px" width="8" height="10"><path d="M6 1 L1.5 5 L6 9" fill="none" stroke="#444" stroke-width="1.8"/></svg></div><div style="left:1035px;top:87px;width:701px;height:688.5px;background:#f0f0f0;overflow:hidden"><div style="left:0;top:0;width:701px;height:30px;background:#fff"></div><div class="t" style="left:8.0px;top:8.0px;font-size:13px;color:#999;letter-spacing:0.108px;">Custom Indicator - xu ma histo BT</div><div class="t" style="left:629.5px;top:6.5px;font-size:14px;color:#8a8a8a;letter-spacing:0.000px;">?</div><svg style="left:673px;top:9px" width="11" height="11"><path d="M.5 .5 L10.5 10.5 M10.5 .5 L.5 10.5" stroke="#777" stroke-width="1.1"/></svg><div style="left:7.5px;top:63px;width:689px;height:593px;background:#fff;border:1px solid #dcdcdc"></div><div style="left:9.5px;top:41.5px;width:47.5px;height:22px;background:#f0f0f0;border:1px solid #dcdcdc;border-bottom:none"></div><div style="left:56px;top:41.5px;width:48px;height:22px;background:#f0f0f0;border:1px solid #dcdcdc;border-bottom:none"></div><div style="left:103px;top:39.5px;width:64.5px;height:25px;background:#fff;border:1px solid #dcdcdc;border-bottom:none"></div><div style="left:166.5px;top:41.5px;width:47.0px;height:22px;background:#f0f0f0;border:1px solid #dcdcdc;border-bottom:none"></div><div style="left:212.5px;top:41.5px;width:48.5px;height:22px;background:#f0f0f0;border:1px solid #dcdcdc;border-bottom:none"></div><div style="left:260px;top:41.5px;width:60.5px;height:22px;background:#f0f0f0;border:1px solid #dcdcdc;border-bottom:none"></div><div style="left:19px;top:73px;width:536px;height:574px;background:#fff;border:1px solid #828790"></div><div style="left:277px;top:75px;width:1px;height:24px;background:#e0e0e0"></div><div style="left:535px;top:75px;width:1px;height:24px;background:#e0e0e0"></div><div style="left:20px;top:98.5px;width:516px;height:21px;background:#fff;border-bottom:1px solid #d2d2d2"></div><div style="left:277px;top:98.5px;width:1px;height:21px;background:#d2d2d2"></div><svg style="left:20.200000000000045px;top:101.24000000000001px" width="18.9" height="18.06" viewBox="0 0 16 17" preserveAspectRatio="none"><path d="M1.5 1 H10.6 L14.6 5 V15.4 l-1.5 -1.9 -1.7 1.7 -1.6 -1.7 -1.7 1.7 -1.7 -1.7 -1.6 1.7 -1.7 -1.7 L1.5 15.4 Z" fill="#f4e58a" stroke="#c4ad4a" stroke-width="1" stroke-linejoin="round"/><path d="M10.6 1 V5 H14.6 Z" fill="#fff" fill-opacity=".7" stroke="#c4ad4a" stroke-width=".9" stroke-linejoin="round"/><text x="2.2" y="11.4" font-family="Liberation Sans" font-size="9.2" fill="#5e5a00" stroke="#5e5a00" stroke-width=".25" letter-spacing="-.45">ab</text></svg><div class="t" style="left:42.3px;top:103.5px;font-size:12.5px;color:#000;letter-spacing:-0.956px;">STR01</div><div class="t" style="left:281.4px;top:103.5px;font-size:12.5px;color:#000;letter-spacing:0.852px;">&lt;&lt;&lt;====  Histogram Settings ====&gt;&gt;&gt;</div><div style="left:20px;top:119.5px;width:516px;height:21px;background:#ebebeb;border-bottom:1px solid #d2d2d2"></div><div style="left:277px;top:119.5px;width:1px;height:21px;background:#d2d2d2"></div><svg style="left:20.200000000000045px;top:122.24000000000001px" width="18.9" height="18.06" viewBox="0 0 16 17" preserveAspectRatio="none"><path d="M1.5 1 H10.6 L14.6 5 V15.4 l-1.5 -1.9 -1.7 1.7 -1.6 -1.7 -1.7 1.7 -1.7 -1.7 -1.6 1.7 -1.7 -1.7 L1.5 15.4 Z" fill="#a6cbf0" stroke="#5a8fcc" stroke-width="1" stroke-linejoin="round"/><path d="M10.6 1 V5 H14.6 Z" fill="#fff" fill-opacity=".7" stroke="#5a8fcc" stroke-width=".9" stroke-linejoin="round"/><text x="1.9" y="11.6" font-family="Liberation Sans" font-weight="bold" font-size="7.4" fill="#102c6a" letter-spacing="-.55">123</text></svg><div class="t" style="left:42.3px;top:124.5px;font-size:12.5px;color:#000;letter-spacing:0.322px;">Width</div><div class="t" style="left:281.4px;top:124.5px;font-size:12.5px;color:#000;letter-spacing:0.000px;">2</div><div style="left:20px;top:140.5px;width:516px;height:21px;background:#fff;border-bottom:1px solid #d2d2d2"></div><div style="left:277px;top:140.5px;width:1px;height:21px;background:#d2d2d2"></div><svg style="left:20.200000000000045px;top:143.24px" width="18.9" height="18.06" viewBox="0 0 16 17" preserveAspectRatio="none"><path d="M1.5 1 H10.6 L14.6 5 V15.4 l-1.5 -1.9 -1.7 1.7 -1.6 -1.7 -1.7 1.7 -1.7 -1.7 -1.6 1.7 -1.7 -1.7 L1.5 15.4 Z" fill="#86e086" stroke="#3fa83f" stroke-width="1" stroke-linejoin="round"/><path d="M10.6 1 V5 H14.6 Z" fill="#fff" fill-opacity=".7" stroke="#3fa83f" stroke-width=".9" stroke-linejoin="round"/><path d="M3 11 L7 6.6 L8.4 6.6 M8.6 10.2 L9.6 11 L12.6 11" stroke="#0a600a" stroke-width="1.6" fill="none"/></svg><div class="t" style="left:42.3px;top:145.5px;font-size:12.5px;color:#000;letter-spacing:0.227px;">UseAutoWidth</div><div class="t" style="left:281.4px;top:145.5px;font-size:12.5px;color:#000;letter-spacing:0.247px;">true</div><div style="left:20px;top:161.5px;width:516px;height:21px;background:#ebebeb;border-bottom:1px solid #d2d2d2"></div><div style="left:277px;top:161.5px;width:1px;height:21px;background:#d2d2d2"></div><svg style="left:20.200000000000045px;top:164.24px" width="18.9" height="18.06" viewBox="0 0 16 17" preserveAspectRatio="none"><path d="M1.5 1 H10.6 L14.6 5 V15.4 l-1.5 -1.9 -1.7 1.7 -1.6 -1.7 -1.7 1.7 -1.7 -1.7 -1.6 1.7 -1.7 -1.7 L1.5 15.4 Z" fill="#ffffff" stroke="#7e7e7e" stroke-width="1" stroke-linejoin="round"/><path d="M10.6 1 V5 H14.6 Z" fill="#e8e8e8" fill-opacity=".7" stroke="#7e7e7e" stroke-width=".9" stroke-linejoin="round"/><rect x="2.6" y="6.4" width="10.6" height="5.4" fill="#f28a18" stroke="#e0541a" stroke-width="1"/><rect x="4.4" y="7.6" width="7" height="3" fill="#ffd83a"/><rect x="5.8" y="8.2" width="4.2" height="1.8" fill="#fff2a0"/></svg><div class="t" style="left:42.3px;top:166.5px;font-size:12.5px;color:#000;letter-spacing:0.408px;">ColorUp</div><div style="left:281px;top:165.0px;width:14px;height:14px;background:#00fa9a;border:1px solid #b4b4b4"></div><div class="t" style="left:298.4px;top:166.5px;font-size:12.5px;color:#000;letter-spacing:0.344px;">MediumSpringGreen</div><div style="left:20px;top:182.5px;width:516px;height:21px;background:#fff;border-bottom:1px solid #d2d2d2"></div><div style="left:277px;top:182.5px;width:1px;height:21px;background:#d2d2d2"></div><svg style="left:20.200000000000045px;top:185.24px" width="18.9" height="18.06" viewBox="0 0 16 17" preserveAspectRatio="none"><path d="M1.5 1 H10.6 L14.6 5 V15.4 l-1.5 -1.9 -1.7 1.7 -1.6 -1.7 -1.7 1.7 -1.7 -1.7 -1.6 1.7 -1.7 -1.7 L1.5 15.4 Z" fill="#ffffff" stroke="#7e7e7e" stroke-width="1" stroke-linejoin="round"/><path d="M10.6 1 V5 H14.6 Z" fill="#e8e8e8" fill-opacity=".7" stroke="#7e7e7e" stroke-width=".9" stroke-linejoin="round"/><rect x="2.6" y="6.4" width="10.6" height="5.4" fill="#f28a18" stroke="#e0541a" stroke-width="1"/><rect x="4.4" y="7.6" width="7" height="3" fill="#ffd83a"/><rect x="5.8" y="8.2" width="4.2" height="1.8" fill="#fff2a0"/></svg><div class="t" style="left:42.3px;top:187.5px;font-size:12.5px;color:#000;letter-spacing:0.285px;">ColorDn</div><div style="left:281px;top:186.0px;width:14px;height:14px;background:#dc143c;border:1px solid #b4b4b4"></div><div class="t" style="left:298.4px;top:187.5px;font-size:12.5px;color:#000;letter-spacing:0.134px;">Crimson</div><div style="left:20px;top:203.5px;width:516px;height:21px;background:#ebebeb;border-bottom:1px solid #d2d2d2"></div><div style="left:277px;top:203.5px;width:1px;height:21px;background:#d2d2d2"></div><svg style="left:20.200000000000045px;top:206.24px" width="18.9" height="18.06" viewBox="0 0 16 17" preserveAspectRatio="none"><path d="M1.5 1 H10.6 L14.6 5 V15.4 l-1.5 -1.9 -1.7 1.7 -1.6 -1.7 -1.7 1.7 -1.7 -1.7 -1.6 1.7 -1.7 -1.7 L1.5 15.4 Z" fill="#ffffff" stroke="#7e7e7e" stroke-width="1" stroke-linejoin="round"/><path d="M10.6 1 V5 H14.6 Z" fill="#e8e8e8" fill-opacity=".7" stroke="#7e7e7e" stroke-width=".9" stroke-linejoin="round"/><rect x="2.6" y="6.4" width="10.6" height="5.4" fill="#f28a18" stroke="#e0541a" stroke-width="1"/><rect x="4.4" y="7.6" width="7" height="3" fill="#ffd83a"/><rect x="5.8" y="8.2" width="4.2" height="1.8" fill="#fff2a0"/></svg><div class="t" style="left:42.3px;top:208.5px;font-size:12.5px;color:#000;letter-spacing:0.408px;">ColorNe</div><div style="left:281px;top:207.0px;width:14px;height:14px;background:#d4d5d4;border:1px solid #b4b4b4"></div><div class="t" style="left:298.4px;top:208.5px;font-size:12.5px;color:#000;letter-spacing:-0.105px;">212,213,212</div><div style="left:20px;top:224.5px;width:516px;height:21px;background:#fff;border-bottom:1px solid #d2d2d2"></div><div style="left:277px;top:224.5px;width:1px;height:21px;background:#d2d2d2"></div><svg style="left:20.200000000000045px;top:227.24px" width="18.9" height="18.06" viewBox="0 0 16 17" preserveAspectRatio="none"><path d="M1.5 1 H10.6 L14.6 5 V15.4 l-1.5 -1.9 -1.7 1.7 -1.6 -1.7 -1.7 1.7 -1.7 -1.7 -1.6 1.7 -1.7 -1.7 L1.5 15.4 Z" fill="#f4e58a" stroke="#c4ad4a" stroke-width="1" stroke-linejoin="round"/><path d="M10.6 1 V5 H14.6 Z" fill="#fff" fill-opacity=".7" stroke="#c4ad4a" stroke-width=".9" stroke-linejoin="round"/><text x="2.2" y="11.4" font-family="Liberation Sans" font-size="9.2" fill="#5e5a00" stroke="#5e5a00" stroke-width=".25" letter-spacing="-.45">ab</text></svg><div class="t" style="left:42.3px;top:229.5px;font-size:12.5px;color:#000;letter-spacing:-0.956px;">STR02</div><div class="t" style="left:281.4px;top:229.5px;font-size:12.5px;color:#000;letter-spacing:0.912px;">&lt;&lt;&lt;====  T1MA Settings ====&gt;&gt;&gt;</div><div style="left:20px;top:245.5px;width:516px;height:21px;background:#ebebeb;border-bottom:1px solid #d2d2d2"></div><div style="left:277px;top:245.5px;width:1px;height:21px;background:#d2d2d2"></div><svg style="left:20.200000000000045px;top:248.24px" width="18.9" height="18.06" viewBox="0 0 16 17" preserveAspectRatio="none"><path d="M1.5 1 H10.6 L14.6 5 V15.4 l-1.5 -1.9 -1.7 1.7 -1.6 -1.7 -1.7 1.7 -1.7 -1.7 -1.6 1.7 -1.7 -1.7 L1.5 15.4 Z" fill="#a6cbf0" stroke="#5a8fcc" stroke-width="1" stroke-linejoin="round"/><path d="M10.6 1 V5 H14.6 Z" fill="#fff" fill-opacity=".7" stroke="#5a8fcc" stroke-width=".9" stroke-linejoin="round"/><text x="1.9" y="11.6" font-family="Liberation Sans" font-weight="bold" font-size="7.4" fill="#102c6a" letter-spacing="-.55">123</text></svg><div class="t" style="left:42.3px;top:250.5px;font-size:12.5px;color:#000;letter-spacing:0.323px;">T1MAper</div><div class="t" style="left:281.4px;top:250.5px;font-size:12.5px;color:#000;letter-spacing:-0.202px;">30</div><div style="left:20px;top:266.5px;width:516px;height:21px;background:#fff;border-bottom:1px solid #d2d2d2"></div><div style="left:277px;top:266.5px;width:1px;height:21px;background:#d2d2d2"></div><svg style="left:20.200000000000045px;top:269.24px" width="18.9" height="18.06" viewBox="0 0 16 17" preserveAspectRatio="none"><path d="M1.5 1 H10.6 L14.6 5 V15.4 l-1.5 -1.9 -1.7 1.7 -1.6 -1.7 -1.7 1.7 -1.7 -1.7 -1.6 1.7 -1.7 -1.7 L1.5 15.4 Z" fill="#a6cbf0" stroke="#5a8fcc" stroke-width="1" stroke-linejoin="round"/><path d="M10.6 1 V5 H14.6 Z" fill="#fff" fill-opacity=".7" stroke="#5a8fcc" stroke-width=".9" stroke-linejoin="round"/><text x="1.9" y="11.6" font-family="Liberation Sans" font-weight="bold" font-size="7.4" fill="#102c6a" letter-spacing="-.55">123</text></svg><div class="t" style="left:42.3px;top:271.5px;font-size:12.5px;color:#000;letter-spacing:0.373px;">T1MAmode</div><div class="t" style="left:281.4px;top:271.5px;font-size:12.5px;color:#000;letter-spacing:0.262px;">Exponential moving average</div><div style="left:20px;top:287.5px;width:516px;height:21px;background:#ebebeb;border-bottom:1px solid #d2d2d2"></div><div style="left:277px;top:287.5px;width:1px;height:21px;background:#d2d2d2"></div><svg style="left:20.200000000000045px;top:290.24px" width="18.9" height="18.06" viewBox="0 0 16 17" preserveAspectRatio="none"><path d="M1.5 1 H10.6 L14.6 5 V15.4 l-1.5 -1.9 -1.7 1.7 -1.6 -1.7 -1.7 1.7 -1.7 -1.7 -1.6 1.7 -1.7 -1.7 L1.5 15.4 Z" fill="#a6cbf0" stroke="#5a8fcc" stroke-width="1" stroke-linejoin="round"/><path d="M10.6 1 V5 H14.6 Z" fill="#fff" fill-opacity=".7" stroke="#5a8fcc" stroke-width=".9" stroke-linejoin="round"/><text x="1.9" y="11.6" font-family="Liberation Sans" font-weight="bold" font-size="7.4" fill="#102c6a" letter-spacing="-.55">123</text></svg><div class="t" style="left:42.3px;top:292.5px;font-size:12.5px;color:#000;letter-spacing:-0.091px;">MAPrice1</div><div class="t" style="left:281.4px;top:292.5px;font-size:12.5px;color:#000;letter-spacing:0.437px;">Median</div><div style="left:20px;top:308.5px;width:516px;height:21px;background:#fff;border-bottom:1px solid #d2d2d2"></div><div style="left:277px;top:308.5px;width:1px;height:21px;background:#d2d2d2"></div><svg style="left:20.200000000000045px;top:311.24px" width="18.9" height="18.06" viewBox="0 0 16 17" preserveAspectRatio="none"><path d="M1.5 1 H10.6 L14.6 5 V15.4 l-1.5 -1.9 -1.7 1.7 -1.6 -1.7 -1.7 1.7 -1.7 -1.7 -1.6 1.7 -1.7 -1.7 L1.5 15.4 Z" fill="#a6cbf0" stroke="#5a8fcc" stroke-width="1" stroke-linejoin="round"/><path d="M10.6 1 V5 H14.6 Z" fill="#fff" fill-opacity=".7" stroke="#5a8fcc" stroke-width=".9" stroke-linejoin="round"/><text x="1.9" y="11.6" font-family="Liberation Sans" font-weight="bold" font-size="7.4" fill="#102c6a" letter-spacing="-.55">123</text></svg><div class="t" style="left:42.3px;top:313.5px;font-size:12.5px;color:#000;letter-spacing:-0.060px;">MAPriceH1</div><div class="t" style="left:281.4px;top:313.5px;font-size:12.5px;color:#000;letter-spacing:0.255px;">High</div><div style="left:20px;top:329.5px;width:516px;height:21px;background:#ebebeb;border-bottom:1px solid #d2d2d2"></div><div style="left:277px;top:329.5px;width:1px;height:21px;background:#d2d2d2"></div><svg style="left:20.200000000000045px;top:332.24px" width="18.9" height="18.06" viewBox="0 0 16 17" preserveAspectRatio="none"><path d="M1.5 1 H10.6 L14.6 5 V15.4 l-1.5 -1.9 -1.7 1.7 -1.6 -1.7 -1.7 1.7 -1.7 -1.7 -1.6 1.7 -1.7 -1.7 L1.5 15.4 Z" fill="#a6cbf0" stroke="#5a8fcc" stroke-width="1" stroke-linejoin="round"/><path d="M10.6 1 V5 H14.6 Z" fill="#fff" fill-opacity=".7" stroke="#5a8fcc" stroke-width=".9" stroke-linejoin="round"/><text x="1.9" y="11.6" font-family="Liberation Sans" font-weight="bold" font-size="7.4" fill="#102c6a" letter-spacing="-.55">123</text></svg><div class="t" style="left:42.3px;top:334.5px;font-size:12.5px;color:#000;letter-spacing:-0.157px;">MAPriceL1</div><div class="t" style="left:281.4px;top:334.5px;font-size:12.5px;color:#000;letter-spacing:0.148px;">Low</div><div style="left:20px;top:350.5px;width:516px;height:21px;background:#fff;border-bottom:1px solid #d2d2d2"></div><div style="left:277px;top:350.5px;width:1px;height:21px;background:#d2d2d2"></div><svg style="left:20.200000000000045px;top:353.24px" width="18.9" height="18.06" viewBox="0 0 16 17" preserveAspectRatio="none"><path d="M1.5 1 H10.6 L14.6 5 V15.4 l-1.5 -1.9 -1.7 1.7 -1.6 -1.7 -1.7 1.7 -1.7 -1.7 -1.6 1.7 -1.7 -1.7 L1.5 15.4 Z" fill="#f4e58a" stroke="#c4ad4a" stroke-width="1" stroke-linejoin="round"/><path d="M10.6 1 V5 H14.6 Z" fill="#fff" fill-opacity=".7" stroke="#c4ad4a" stroke-width=".9" stroke-linejoin="round"/><text x="2.2" y="11.4" font-family="Liberation Sans" font-size="9.2" fill="#5e5a00" stroke="#5e5a00" stroke-width=".25" letter-spacing="-.45">ab</text></svg><div class="t" style="left:42.3px;top:355.5px;font-size:12.5px;color:#000;letter-spacing:-0.956px;">STR03</div><div class="t" style="left:281.4px;top:355.5px;font-size:12.5px;color:#000;letter-spacing:0.881px;">&lt;&lt;&lt;====  S1MA Settings ====&gt;&gt;&gt;</div><div style="left:20px;top:371.5px;width:516px;height:21px;background:#ebebeb;border-bottom:1px solid #d2d2d2"></div><div style="left:277px;top:371.5px;width:1px;height:21px;background:#d2d2d2"></div><svg style="left:20.200000000000045px;top:374.24px" width="18.9" height="18.06" viewBox="0 0 16 17" preserveAspectRatio="none"><path d="M1.5 1 H10.6 L14.6 5 V15.4 l-1.5 -1.9 -1.7 1.7 -1.6 -1.7 -1.7 1.7 -1.7 -1.7 -1.6 1.7 -1.7 -1.7 L1.5 15.4 Z" fill="#a6cbf0" stroke="#5a8fcc" stroke-width="1" stroke-linejoin="round"/><path d="M10.6 1 V5 H14.6 Z" fill="#fff" fill-opacity=".7" stroke="#5a8fcc" stroke-width=".9" stroke-linejoin="round"/><text x="1.9" y="11.6" font-family="Liberation Sans" font-weight="bold" font-size="7.4" fill="#102c6a" letter-spacing="-.55">123</text></svg><div class="t" style="left:42.3px;top:376.5px;font-size:12.5px;color:#000;letter-spacing:0.215px;">S1MAper</div><div class="t" style="left:281.4px;top:376.5px;font-size:12.5px;color:#000;letter-spacing:-0.202px;">15</div><div style="left:20px;top:392.5px;width:516px;height:21px;background:#fff;border-bottom:1px solid #d2d2d2"></div><div style="left:277px;top:392.5px;width:1px;height:21px;background:#d2d2d2"></div><svg style="left:20.200000000000045px;top:395.24px" width="18.9" height="18.06" viewBox="0 0 16 17" preserveAspectRatio="none"><path d="M1.5 1 H10.6 L14.6 5 V15.4 l-1.5 -1.9 -1.7 1.7 -1.6 -1.7 -1.7 1.7 -1.7 -1.7 -1.6 1.7 -1.7 -1.7 L1.5 15.4 Z" fill="#a6cbf0" stroke="#5a8fcc" stroke-width="1" stroke-linejoin="round"/><path d="M10.6 1 V5 H14.6 Z" fill="#fff" fill-opacity=".7" stroke="#5a8fcc" stroke-width=".9" stroke-linejoin="round"/><text x="1.9" y="11.6" font-family="Liberation Sans" font-weight="bold" font-size="7.4" fill="#102c6a" letter-spacing="-.55">123</text></svg><div class="t" style="left:42.3px;top:397.5px;font-size:12.5px;color:#000;letter-spacing:0.279px;">S1MAmode</div><div class="t" style="left:281.4px;top:397.5px;font-size:12.5px;color:#000;letter-spacing:0.262px;">Exponential moving average</div><div style="left:20px;top:413.5px;width:516px;height:21px;background:#ebebeb;border-bottom:1px solid #d2d2d2"></div><div style="left:277px;top:413.5px;width:1px;height:21px;background:#d2d2d2"></div><svg style="left:20.200000000000045px;top:416.24px" width="18.9" height="18.06" viewBox="0 0 16 17" preserveAspectRatio="none"><path d="M1.5 1 H10.6 L14.6 5 V15.4 l-1.5 -1.9 -1.7 1.7 -1.6 -1.7 -1.7 1.7 -1.7 -1.7 -1.6 1.7 -1.7 -1.7 L1.5 15.4 Z" fill="#a6cbf0" stroke="#5a8fcc" stroke-width="1" stroke-linejoin="round"/><path d="M10.6 1 V5 H14.6 Z" fill="#fff" fill-opacity=".7" stroke="#5a8fcc" stroke-width=".9" stroke-linejoin="round"/><text x="1.9" y="11.6" font-family="Liberation Sans" font-weight="bold" font-size="7.4" fill="#102c6a" letter-spacing="-.55">123</text></svg><div class="t" style="left:42.3px;top:418.5px;font-size:12.5px;color:#000;letter-spacing:-0.091px;">MAPrice2</div><div class="t" style="left:281.4px;top:418.5px;font-size:12.5px;color:#000;letter-spacing:0.437px;">Median</div><div style="left:20px;top:434.5px;width:516px;height:21px;background:#fff;border-bottom:1px solid #d2d2d2"></div><div style="left:277px;top:434.5px;width:1px;height:21px;background:#d2d2d2"></div><svg style="left:20.200000000000045px;top:437.24px" width="18.9" height="18.06" viewBox="0 0 16 17" preserveAspectRatio="none"><path d="M1.5 1 H10.6 L14.6 5 V15.4 l-1.5 -1.9 -1.7 1.7 -1.6 -1.7 -1.7 1.7 -1.7 -1.7 -1.6 1.7 -1.7 -1.7 L1.5 15.4 Z" fill="#a6cbf0" stroke="#5a8fcc" stroke-width="1" stroke-linejoin="round"/><path d="M10.6 1 V5 H14.6 Z" fill="#fff" fill-opacity=".7" stroke="#5a8fcc" stroke-width=".9" stroke-linejoin="round"/><text x="1.9" y="11.6" font-family="Liberation Sans" font-weight="bold" font-size="7.4" fill="#102c6a" letter-spacing="-.55">123</text></svg><div class="t" style="left:42.3px;top:439.5px;font-size:12.5px;color:#000;letter-spacing:-0.060px;">MAPriceH2</div><div class="t" style="left:281.4px;top:439.5px;font-size:12.5px;color:#000;letter-spacing:0.255px;">High</div><div style="left:20px;top:455.5px;width:516px;height:21px;background:#ebebeb;border-bottom:1px solid #d2d2d2"></div><div style="left:277px;top:455.5px;width:1px;height:21px;background:#d2d2d2"></div><svg style="left:20.200000000000045px;top:458.24px" width="18.9" height="18.06" viewBox="0 0 16 17" preserveAspectRatio="none"><path d="M1.5 1 H10.6 L14.6 5 V15.4 l-1.5 -1.9 -1.7 1.7 -1.6 -1.7 -1.7 1.7 -1.7 -1.7 -1.6 1.7 -1.7 -1.7 L1.5 15.4 Z" fill="#a6cbf0" stroke="#5a8fcc" stroke-width="1" stroke-linejoin="round"/><path d="M10.6 1 V5 H14.6 Z" fill="#fff" fill-opacity=".7" stroke="#5a8fcc" stroke-width=".9" stroke-linejoin="round"/><text x="1.9" y="11.6" font-family="Liberation Sans" font-weight="bold" font-size="7.4" fill="#102c6a" letter-spacing="-.55">123</text></svg><div class="t" style="left:42.3px;top:460.5px;font-size:12.5px;color:#000;letter-spacing:-0.157px;">MAPriceL2</div><div class="t" style="left:281.4px;top:460.5px;font-size:12.5px;color:#000;letter-spacing:0.148px;">Low</div><div style="left:20px;top:476.5px;width:516px;height:21px;background:#fff;border-bottom:1px solid #d2d2d2"></div><div style="left:277px;top:476.5px;width:1px;height:21px;background:#d2d2d2"></div><svg style="left:20.200000000000045px;top:479.24px" width="18.9" height="18.06" viewBox="0 0 16 17" preserveAspectRatio="none"><path d="M1.5 1 H10.6 L14.6 5 V15.4 l-1.5 -1.9 -1.7 1.7 -1.6 -1.7 -1.7 1.7 -1.7 -1.7 -1.6 1.7 -1.7 -1.7 L1.5 15.4 Z" fill="#f4e58a" stroke="#c4ad4a" stroke-width="1" stroke-linejoin="round"/><path d="M10.6 1 V5 H14.6 Z" fill="#fff" fill-opacity=".7" stroke="#c4ad4a" stroke-width=".9" stroke-linejoin="round"/><text x="2.2" y="11.4" font-family="Liberation Sans" font-size="9.2" fill="#5e5a00" stroke="#5e5a00" stroke-width=".25" letter-spacing="-.45">ab</text></svg><div class="t" style="left:42.3px;top:481.5px;font-size:12.5px;color:#000;letter-spacing:-0.956px;">STR04</div><div class="t" style="left:281.4px;top:481.5px;font-size:12.5px;color:#000;letter-spacing:0.877px;">&lt;&lt;&lt;====  Arrows Settings ====&gt;&gt;&gt;</div><div style="left:20px;top:497.5px;width:516px;height:21px;background:#ebebeb;border-bottom:1px solid #d2d2d2"></div><div style="left:277px;top:497.5px;width:1px;height:21px;background:#d2d2d2"></div><svg style="left:20.200000000000045px;top:500.24px" width="18.9" height="18.06" viewBox="0 0 16 17" preserveAspectRatio="none"><path d="M1.5 1 H10.6 L14.6 5 V15.4 l-1.5 -1.9 -1.7 1.7 -1.6 -1.7 -1.7 1.7 -1.7 -1.7 -1.6 1.7 -1.7 -1.7 L1.5 15.4 Z" fill="#86e086" stroke="#3fa83f" stroke-width="1" stroke-linejoin="round"/><path d="M10.6 1 V5 H14.6 Z" fill="#fff" fill-opacity=".7" stroke="#3fa83f" stroke-width=".9" stroke-linejoin="round"/><path d="M3 11 L7 6.6 L8.4 6.6 M8.6 10.2 L9.6 11 L12.6 11" stroke="#0a600a" stroke-width="1.6" fill="none"/></svg><div class="t" style="left:42.3px;top:502.5px;font-size:12.5px;color:#000;letter-spacing:0.272px;">arrowsVisible</div><div class="t" style="left:281.4px;top:502.5px;font-size:12.5px;color:#000;letter-spacing:0.044px;">false</div><div style="left:20px;top:518.5px;width:516px;height:21px;background:#fff;border-bottom:1px solid #d2d2d2"></div><div style="left:277px;top:518.5px;width:1px;height:21px;background:#d2d2d2"></div><svg style="left:20.200000000000045px;top:521.24px" width="18.9" height="18.06" viewBox="0 0 16 17" preserveAspectRatio="none"><path d="M1.5 1 H10.6 L14.6 5 V15.4 l-1.5 -1.9 -1.7 1.7 -1.6 -1.7 -1.7 1.7 -1.7 -1.7 -1.6 1.7 -1.7 -1.7 L1.5 15.4 Z" fill="#86e086" stroke="#3fa83f" stroke-width="1" stroke-linejoin="round"/><path d="M10.6 1 V5 H14.6 Z" fill="#fff" fill-opacity=".7" stroke="#3fa83f" stroke-width=".9" stroke-linejoin="round"/><path d="M3 11 L7 6.6 L8.4 6.6 M8.6 10.2 L9.6 11 L12.6 11" stroke="#0a600a" stroke-width="1.6" fill="none"/></svg><div class="t" style="left:42.3px;top:523.5px;font-size:12.5px;color:#000;letter-spacing:0.285px;">arrowsOnNewest</div><div class="t" style="left:281.4px;top:523.5px;font-size:12.5px;color:#000;letter-spacing:0.044px;">false</div><div style="left:20px;top:539.5px;width:516px;height:21px;background:#ebebeb;border-bottom:1px solid #d2d2d2"></div><div style="left:277px;top:539.5px;width:1px;height:21px;background:#d2d2d2"></div><svg style="left:20.200000000000045px;top:542.24px" width="18.9" height="18.06" viewBox="0 0 16 17" preserveAspectRatio="none"><path d="M1.5 1 H10.6 L14.6 5 V15.4 l-1.5 -1.9 -1.7 1.7 -1.6 -1.7 -1.7 1.7 -1.7 -1.7 -1.6 1.7 -1.7 -1.7 L1.5 15.4 Z" fill="#f4e58a" stroke="#c4ad4a" stroke-width="1" stroke-linejoin="round"/><path d="M10.6 1 V5 H14.6 Z" fill="#fff" fill-opacity=".7" stroke="#c4ad4a" stroke-width=".9" stroke-linejoin="round"/><text x="2.2" y="11.4" font-family="Liberation Sans" font-size="9.2" fill="#5e5a00" stroke="#5e5a00" stroke-width=".25" letter-spacing="-.45">ab</text></svg><div class="t" style="left:42.3px;top:544.5px;font-size:12.5px;color:#000;letter-spacing:0.384px;">arrowsIdentifier</div><div class="t" style="left:281.4px;top:544.5px;font-size:12.5px;color:#000;letter-spacing:0.191px;">XU Arrows1</div><div style="left:20px;top:560.5px;width:516px;height:21px;background:#fff;border-bottom:1px solid #d2d2d2"></div><div style="left:277px;top:560.5px;width:1px;height:21px;background:#d2d2d2"></div><svg style="left:20.200000000000045px;top:563.24px" width="18.9" height="18.06" viewBox="0 0 16 17" preserveAspectRatio="none"><path d="M1.5 1 H10.6 L14.6 5 V15.4 l-1.5 -1.9 -1.7 1.7 -1.6 -1.7 -1.7 1.7 -1.7 -1.7 -1.6 1.7 -1.7 -1.7 L1.5 15.4 Z" fill="#9fe0ea" stroke="#4aaabf" stroke-width="1" stroke-linejoin="round"/><path d="M10.6 1 V5 H14.6 Z" fill="#fff" fill-opacity=".7" stroke="#4aaabf" stroke-width=".9" stroke-linejoin="round"/><text x="2.4" y="7.8" font-family="Liberation Sans" font-size="6.6" font-weight="bold" fill="#0a5088">1</text><path d="M5.2 10.6 L8 3.4" stroke="#0a5088" stroke-width="1"/><text x="7.4" y="11.4" font-family="Liberation Sans" font-size="6.6" font-weight="bold" fill="#0a5088">2</text></svg><div class="t" style="left:42.3px;top:565.5px;font-size:12.5px;color:#000;letter-spacing:0.402px;">arrowsUpperGap</div><div class="t" style="left:281.4px;top:565.5px;font-size:12.5px;color:#000;letter-spacing:-0.510px;">0.5</div><div style="left:20px;top:581.5px;width:516px;height:21px;background:#ebebeb;border-bottom:1px solid #d2d2d2"></div><div style="left:277px;top:581.5px;width:1px;height:21px;background:#d2d2d2"></div><svg style="left:20.200000000000045px;top:584.24px" width="18.9" height="18.06" viewBox="0 0 16 17" preserveAspectRatio="none"><path d="M1.5 1 H10.6 L14.6 5 V15.4 l-1.5 -1.9 -1.7 1.7 -1.6 -1.7 -1.7 1.7 -1.7 -1.7 -1.6 1.7 -1.7 -1.7 L1.5 15.4 Z" fill="#9fe0ea" stroke="#4aaabf" stroke-width="1" stroke-linejoin="round"/><path d="M10.6 1 V5 H14.6 Z" fill="#fff" fill-opacity=".7" stroke="#4aaabf" stroke-width=".9" stroke-linejoin="round"/><text x="2.4" y="7.8" font-family="Liberation Sans" font-size="6.6" font-weight="bold" fill="#0a5088">1</text><path d="M5.2 10.6 L8 3.4" stroke="#0a5088" stroke-width="1"/><text x="7.4" y="11.4" font-family="Liberation Sans" font-size="6.6" font-weight="bold" fill="#0a5088">2</text></svg><div class="t" style="left:42.3px;top:586.5px;font-size:12.5px;color:#000;letter-spacing:0.247px;">arrowsLowerGap</div><div class="t" style="left:281.4px;top:586.5px;font-size:12.5px;color:#000;letter-spacing:-0.510px;">0.5</div><div style="left:20px;top:602.5px;width:516px;height:21px;background:#fff;border-bottom:1px solid #d2d2d2"></div><div style="left:277px;top:602.5px;width:1px;height:21px;background:#d2d2d2"></div><svg style="left:20.200000000000045px;top:605.24px" width="18.9" height="18.06" viewBox="0 0 16 17" preserveAspectRatio="none"><path d="M1.5 1 H10.6 L14.6 5 V15.4 l-1.5 -1.9 -1.7 1.7 -1.6 -1.7 -1.7 1.7 -1.7 -1.7 -1.6 1.7 -1.7 -1.7 L1.5 15.4 Z" fill="#9fe0ea" stroke="#4aaabf" stroke-width="1" stroke-linejoin="round"/><path d="M10.6 1 V5 H14.6 Z" fill="#fff" fill-opacity=".7" stroke="#4aaabf" stroke-width=".9" stroke-linejoin="round"/><text x="2.4" y="7.8" font-family="Liberation Sans" font-size="6.6" font-weight="bold" fill="#0a5088">1</text><path d="M5.2 10.6 L8 3.4" stroke="#0a5088" stroke-width="1"/><text x="7.4" y="11.4" font-family="Liberation Sans" font-size="6.6" font-weight="bold" fill="#0a5088">2</text></svg><div class="t" style="left:42.3px;top:607.5px;font-size:12.5px;color:#000;letter-spacing:0.273px;">arrowsNeuGap</div><div class="t" style="left:281.4px;top:607.5px;font-size:12.5px;color:#000;letter-spacing:-0.510px;">0.5</div><div style="left:20px;top:623.5px;width:516px;height:21px;background:#ebebeb;border-bottom:1px solid #d2d2d2"></div><div style="left:277px;top:623.5px;width:1px;height:21px;background:#d2d2d2"></div><svg style="left:20.200000000000045px;top:626.24px" width="18.9" height="18.06" viewBox="0 0 16 17" preserveAspectRatio="none"><path d="M1.5 1 H10.6 L14.6 5 V15.4 l-1.5 -1.9 -1.7 1.7 -1.6 -1.7 -1.7 1.7 -1.7 -1.7 -1.6 1.7 -1.7 -1.7 L1.5 15.4 Z" fill="#ffffff" stroke="#7e7e7e" stroke-width="1" stroke-linejoin="round"/><path d="M10.6 1 V5 H14.6 Z" fill="#e8e8e8" fill-opacity=".7" stroke="#7e7e7e" stroke-width=".9" stroke-linejoin="round"/><rect x="2.6" y="6.4" width="10.6" height="5.4" fill="#f28a18" stroke="#e0541a" stroke-width="1"/><rect x="4.4" y="7.6" width="7" height="3" fill="#ffd83a"/><rect x="5.8" y="8.2" width="4.2" height="1.8" fill="#fff2a0"/></svg><div class="t" style="left:42.3px;top:628.5px;font-size:12.5px;color:#000;letter-spacing:0.404px;">arrowsUpColor</div><div style="left:281px;top:627.0px;width:14px;height:14px;background:#3cb371;border:1px solid #b4b4b4"></div><div class="t" style="left:298.4px;top:628.5px;font-size:12.5px;color:#000;letter-spacing:0.138px;">MediumSeaGreen</div><div style="left:536px;top:74px;width:18px;height:572px;background:#f0f0f0"></div><div style="left:537px;top:92px;width:15px;height:214px;background:#cdcdcd"></div><svg style="left:540px;top:79px" width="10" height="7"><path d="M1 6 L5 1.6 L9 6" fill="none" stroke="#555" stroke-width="1.7"/></svg><svg style="left:540px;top:633px" width="10" height="7"><path d="M1 1 L5 5.4 L9 1" fill="none" stroke="#555" stroke-width="1.7"/></svg><div style="left:564.5px;top:573.5px;width:120.5px;height:27.5px;background:#e1e1e1;border:1px solid #adadad"></div><div class="t" style="left:629.3px;top:581.0px;font-size:12.5px;color:#000">(<u>L</u>)</div><div style="left:564.5px;top:616.5px;width:120.5px;height:27.5px;background:#e1e1e1;border:1px solid #adadad"></div><div class="t" style="left:628.6px;top:624.0px;font-size:12.5px;color:#000">(<u>S</u>)</div><div style="left:417.5px;top:652.5px;width:85.5px;height:27.5px;background:#e1e1e1;border:1px solid #adadad"></div><div style="left:512px;top:652.5px;width:86px;height:27.5px;background:#e1e1e1;border:1px solid #adadad"></div><div style="left:606px;top:652.5px;width:86px;height:27.5px;background:#e1e1e1;border:1px solid #adadad"></div><svg style="left:0;top:0" width="701" height="688.5"><text class="cjk" x="15" y="57.3" font-size="12.2" fill="#000">关于</text><text class="cjk" x="61.5" y="57.3" font-size="12.2" fill="#000">常用</text><text class="cjk" x="110.5" y="55.5" font-size="12.2" fill="#000">输入参数</text><text class="cjk" x="172" y="57.3" font-size="12.2" fill="#000">颜色</text><text class="cjk" x="218" y="57.3" font-size="12.2" fill="#000">水平位</text><text class="cjk" x="265.5" y="57.3" font-size="12.2" fill="#000">应用范围</text><text class="cjk" x="27" y="91.2" font-size="12.2" fill="#000">变量</text><text class="cjk" x="283" y="91.2" font-size="12.2" fill="#000">赋值</text><text class="cjk" x="604.91" y="591.85" font-size="12.2" fill="#000">加载</text><text class="cjk" x="604.22" y="634.85" font-size="12.2" fill="#000">保存</text><text class="cjk" x="448.05" y="670.85" font-size="12.2" fill="#000">确定</text><text class="cjk" x="542.8" y="670.85" font-size="12.2" fill="#000">取消</text><text class="cjk" x="636.8" y="670.85" font-size="12.2" fill="#000">重设</text></svg><svg style="left:688px;top:675.5px" width="12" height="12"><rect x="8" y="2" width="1.5" height="1.5" fill="#b8b8b8"/><rect x="8" y="5" width="1.5" height="1.5" fill="#b8b8b8"/><rect x="5" y="5" width="1.5" height="1.5" fill="#b8b8b8"/><rect x="8" y="8" width="1.5" height="1.5" fill="#b8b8b8"/><rect x="5" y="8" width="1.5" height="1.5" fill="#b8b8b8"/><rect x="2" y="8" width="1.5" height="1.5" fill="#b8b8b8"/></svg></div>
</body></html>
